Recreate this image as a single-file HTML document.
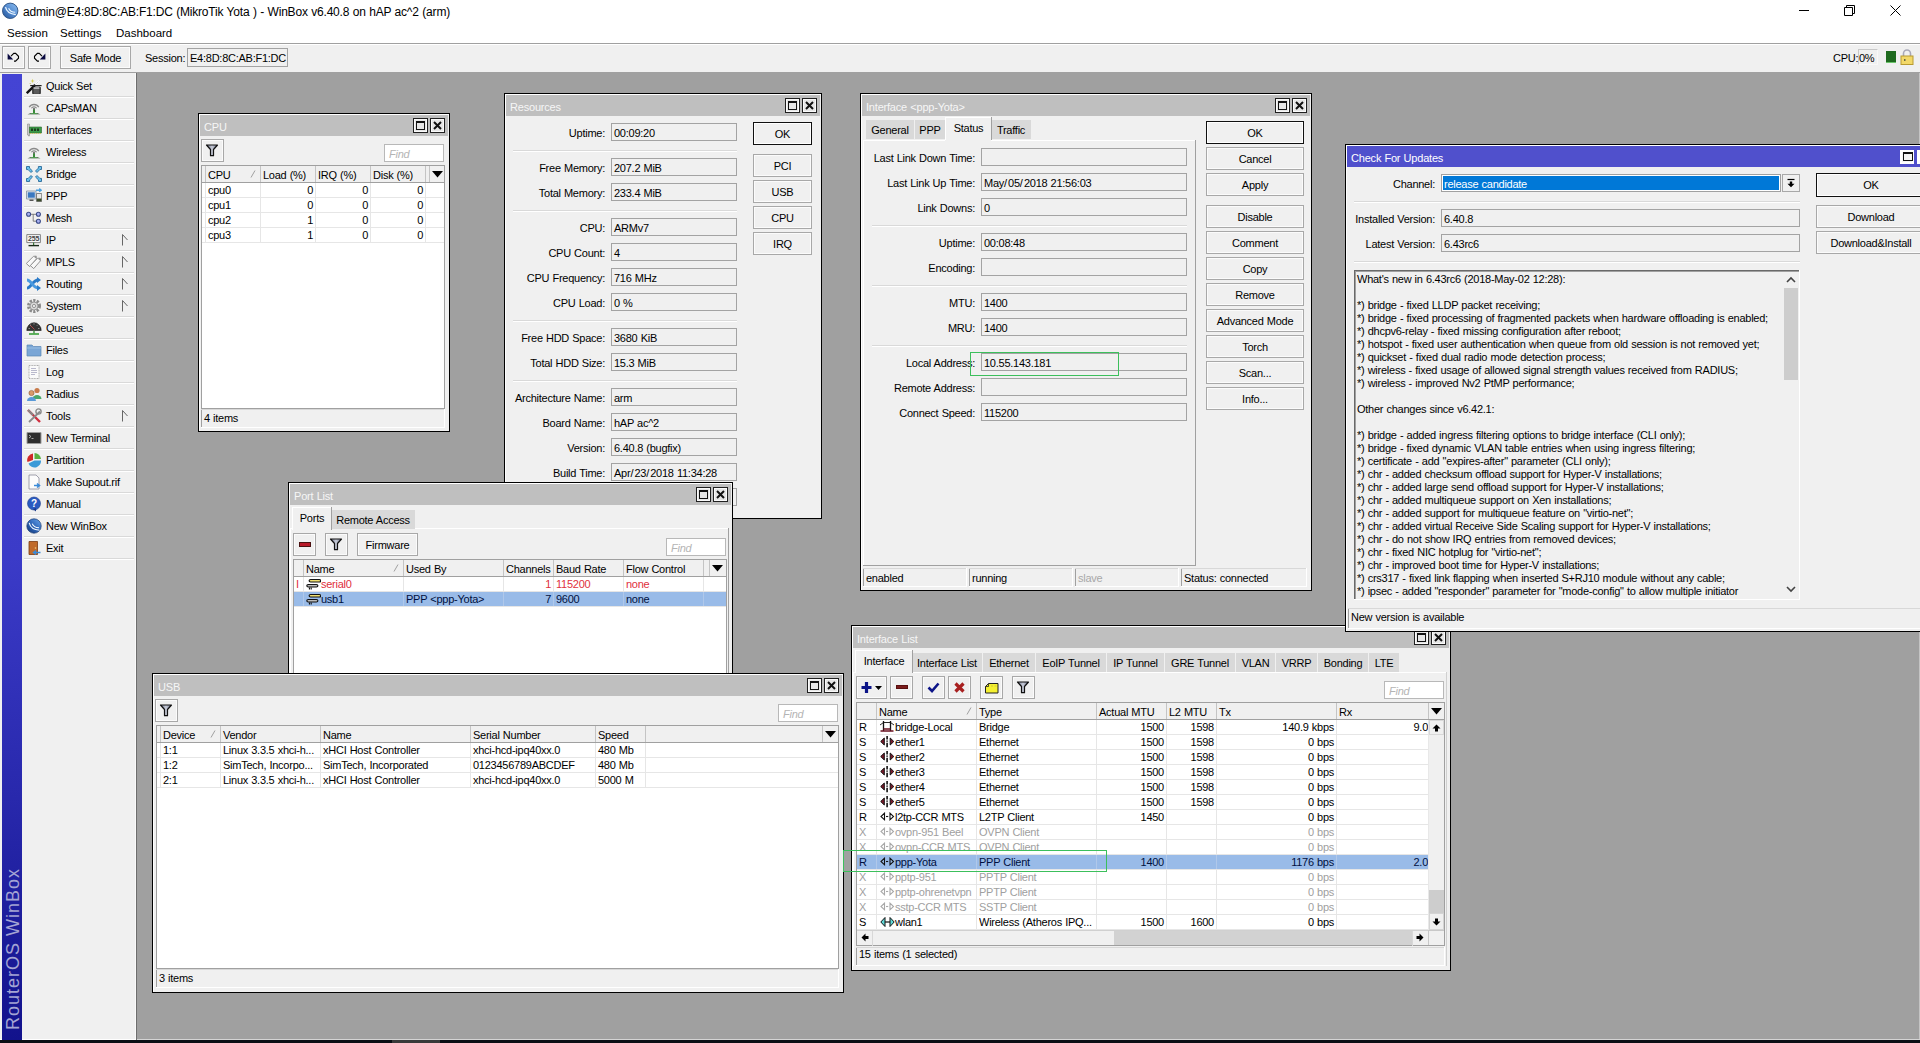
<!DOCTYPE html><html><head><meta charset="utf-8"><style>
html,body{margin:0;padding:0}
body{width:1920px;height:1043px;overflow:hidden;position:relative;background:#a0a0a0;font-family:"Liberation Sans",sans-serif;font-size:11px;color:#000;letter-spacing:-0.25px}
.a{position:absolute}
.t{position:absolute;white-space:nowrap;line-height:13px;word-spacing:0.4px}
.sl{font-style:normal;letter-spacing:1px}
svg{display:block}
</style></head><body>
<div class="a" style="left:0px;top:0px;width:1920px;height:43px;background:#ffffff;"></div>
<div class="a" style="left:0px;top:0px;"><svg width="21" height="21" viewBox="0 0 21 21"><defs><linearGradient id="g1" x1="1" y1="0" x2="0" y2="1"><stop offset="0" stop-color="#8ec0f4"/><stop offset="0.55" stop-color="#4f86cc"/><stop offset="1" stop-color="#1e4f92"/></linearGradient></defs><circle cx="10.2" cy="10.8" r="7.7" fill="url(#g1)" stroke="#2a4f80" stroke-width="0.9"/><path d="M5.5 7.2Q7 13.8 15.8 14.6" stroke="#eaf6ff" stroke-width="1.3" fill="none"/><path d="M8.6 8.2Q10.2 12 15.2 12.3" stroke="#eaf6ff" stroke-width="1.1" fill="none"/></svg></div>
<div class="t" style="top:6px;left:23px;color:#000;font-size:12px;letter-spacing:-0.2px;">admin@E4:8D:8C:AB:F1:DC (MikroTik Yota ) - WinBox v6.40.8 on hAP ac^2 (arm)</div>
<div class="a" style="left:1799px;top:10px;width:10px;height:1px;background:#000;"></div>
<div class="a" style="left:1844px;top:5px;"><svg width="11" height="11" viewBox="0 0 11 11"><path d="M0.5 2.5h8v8h-8z M2.5 2.5v-2h8v8h-2" stroke="#000" fill="none"/></svg></div>
<div class="a" style="left:1890px;top:5px;"><svg width="11" height="11" viewBox="0 0 11 11"><path d="M0.5 0.5L10.5 10.5M10.5 0.5L0.5 10.5" stroke="#000" fill="none"/></svg></div>
<div class="t" style="top:27px;left:7px;color:#000;font-size:11.5px;letter-spacing:0px;">Session</div>
<div class="t" style="top:27px;left:60px;color:#000;font-size:11.5px;letter-spacing:0px;">Settings</div>
<div class="t" style="top:27px;left:116px;color:#000;font-size:11.5px;letter-spacing:0px;">Dashboard</div>
<div class="a" style="left:0px;top:43px;width:1920px;height:1px;background:#a0a0a0;"></div>
<div class="a" style="left:0px;top:44px;width:1920px;height:1px;background:#ffffff;"></div>
<div class="a" style="left:0px;top:45px;width:1920px;height:27px;background:#f0f0f0;"></div>
<div class="a" style="left:2px;top:46px;width:23px;height:23px;background:#f0f0f0;border:1px solid #a8a8a8;box-sizing:border-box;"></div>
<div class="a" style="left:3px;top:47px;width:21px;height:21px;border:1px solid #fbfbfb;box-sizing:border-box;"></div>
<div class="a" style="left:28px;top:46px;width:23px;height:23px;background:#f0f0f0;border:1px solid #a8a8a8;box-sizing:border-box;"></div>
<div class="a" style="left:29px;top:47px;width:21px;height:21px;border:1px solid #fbfbfb;box-sizing:border-box;"></div>
<div class="a" style="left:7px;top:52px;"><svg width="13" height="11" viewBox="0 0 13 11"><path d="M0.6 1.4L0.6 7.6L6.2 7.6z" fill="#0a0a40"/><path d="M4 4.2L6.8 1.4H8.6L11.5 4.3V6.2L8.6 9.1H7" stroke="#000" stroke-width="1.1" fill="none"/></svg></div>
<div class="a" style="left:33px;top:52px;"><svg width="13" height="11" viewBox="0 0 13 11"><path d="M12.4 1.4L12.4 7.6L6.8 7.6z" fill="#0a0a40"/><path d="M9 4.2L6.2 1.4H4.4L1.5 4.3V6.2L4.4 9.1H6" stroke="#000" stroke-width="1.1" fill="none"/></svg></div>
<div class="a" style="left:60px;top:46px;width:71px;height:23px;background:#f0f0f0;border:1px solid #a8a8a8;box-sizing:border-box;"></div>
<div class="a" style="left:61px;top:47px;width:69px;height:21px;border:1px solid #fbfbfb;box-sizing:border-box;"></div>
<div class="t" style="top:52px;left:-104.5px;width:400px;text-align:center;">Safe Mode</div>
<div class="t" style="top:52px;left:145px;">Session:</div>
<div class="a" style="left:187px;top:48px;width:101px;height:19px;background:#f0f0f0;border:1px solid #a3a3a3;box-sizing:border-box;"></div>
<div class="t" style="top:52px;left:190px;color:#000;">E4:8D:8C:AB:F1:DC</div>
<div class="t" style="top:52px;left:1833px;">CPU:</div>
<div class="a" style="left:1858px;top:49px;width:20px;height:16px;background:#f0f0f0;border:1px solid #c8c8c8;box-sizing:border-box;border-right-color:#f8f8f8;border-bottom-color:#f8f8f8;"></div>
<div class="t" style="top:52px;left:1859px;">0%</div>
<div class="a" style="left:1886px;top:51px;width:10px;height:12px;background:#1e6a1e;"></div>
<div class="a" style="left:1886px;top:62px;width:10px;height:1px;background:#6ac46a;"></div>
<div class="a" style="left:1900px;top:49px;"><svg width="14" height="16" viewBox="0 0 14 16"><path d="M3.5 7V4.5a3.5 3.5 0 0 1 7 0V7" stroke="#a8a8b8" stroke-width="1.6" fill="none"/><rect x="1" y="7" width="12" height="8.5" fill="#f2d868" stroke="#b89a30"/><rect x="4" y="10" width="1.5" height="2" fill="#664"/></svg></div>
<div class="a" style="left:0px;top:72px;width:1920px;height:1px;background:#a0a0a0;"></div>
<div class="a" style="left:0px;top:73px;width:136px;height:967px;background:#f0f0f0;"></div>
<div class="a" style="left:135px;top:73px;width:1px;height:967px;background:#fafafa;"></div>
<div class="a" style="left:136px;top:73px;width:1px;height:967px;background:#6e6e6e;"></div>
<div class="a" style="left:1919px;top:73px;width:1px;height:966px;background:#c4c4c4;"></div>
<div class="a" style="left:0px;top:1039px;width:136px;height:1px;background:#ffffff;"></div>
<div class="a" style="left:137px;top:1039px;width:1783px;height:1px;background:#d4d4d4;"></div>
<div class="a" style="left:2px;top:74px;width:20px;height:966px;background:linear-gradient(#4444d4,#3b3bc8 50%,#2828ac 75%,#12128c);"></div>
<div class="a" style="left:3px;top:870px;"><div style="width:170px;height:20px;transform-origin:0 0;transform:translate(0px,160px) rotate(-90deg);font-size:18px;line-height:20px;color:#a4a4d4;letter-spacing:1px;white-space:nowrap">RouterOS WinBox</div></div>
<div class="t" style="top:80px;left:46px;">Quick Set</div>
<div class="a" style="left:24px;top:96px;width:110px;height:1px;background:#d9d9d9;"></div>
<div class="a" style="left:24px;top:97px;width:110px;height:1px;background:#ffffff;"></div>
<div class="a" style="left:26px;top:78px;"><svg width="16" height="16" viewBox="0 0 16 16"><path d="M0.8 15.2L9.2 6.8" stroke="#111" stroke-width="2.4"/><path d="M9.8 6.2L13.4 2.8" stroke="#fff" stroke-width="2.2"/><path d="M9.8 6.2L13.4 2.8" stroke="#888" stroke-width="0.5" stroke-dasharray="1 1"/><path d="M6.8 9.2h7.4v6.2a1 1 0 0 1-1 1H7.8a1 1 0 0 1-1-1z" fill="#5a5a5a" stroke="#111" stroke-width="1"/><path d="M4.2 7.6h11.4" stroke="#222" stroke-width="1.2"/><path d="M7.6 10h5.8" stroke="#eee" stroke-width="1.2"/><path d="M6.5 0.8l.6 1.6 1.6.6-1.6.6-.6 1.6-.6-1.6-1.6-.6 1.6-.6z" fill="#d6cf5a"/><circle cx="4.2" cy="5.6" r="0.7" fill="#c8c060"/></svg></div>
<div class="t" style="top:102px;left:46px;">CAPsMAN</div>
<div class="a" style="left:24px;top:118px;width:110px;height:1px;background:#d9d9d9;"></div>
<div class="a" style="left:24px;top:119px;width:110px;height:1px;background:#ffffff;"></div>
<div class="a" style="left:26px;top:100px;"><svg width="16" height="16" viewBox="0 0 16 16"><path d="M3.2 7.2a5.6 5.6 0 0 1 9.6 0" stroke="#8a8a8a" stroke-width="1.3" fill="none"/><path d="M5.4 8.3a3 3 0 0 1 5.2 0" stroke="#8a8a8a" stroke-width="1.2" fill="none"/><circle cx="8" cy="9" r="1" fill="#555"/><path d="M8 9.5v4" stroke="#3c8a3c" stroke-width="2"/><path d="M1.5 14.3q6.5-2.5 13 0z" fill="#1e3a1e"/><path d="M5 13.6h6" stroke="#5ab05a" stroke-width="0.9"/></svg></div>
<div class="t" style="top:124px;left:46px;">Interfaces</div>
<div class="a" style="left:24px;top:140px;width:110px;height:1px;background:#d9d9d9;"></div>
<div class="a" style="left:24px;top:141px;width:110px;height:1px;background:#ffffff;"></div>
<div class="a" style="left:26px;top:122px;"><svg width="16" height="16" viewBox="0 0 16 16"><path d="M1.5 2h2v12h-1v-1h-1z" fill="#c8c8c8" stroke="#8a8a8a" stroke-width="0.6"/><path d="M3.5 5h12v6h-12z" fill="#3c9a4a" stroke="#2a6a2a" stroke-width="0.6"/><path d="M5 6.5h2v2.5h-2zM8 6.5h2v2.5h-2zM11 6.5h2v2.5h-2z" fill="#1e3a1e"/><path d="M4 11.5h11" stroke="#d0c060" stroke-width="1" stroke-dasharray="1 1"/></svg></div>
<div class="t" style="top:146px;left:46px;">Wireless</div>
<div class="a" style="left:24px;top:162px;width:110px;height:1px;background:#d9d9d9;"></div>
<div class="a" style="left:24px;top:163px;width:110px;height:1px;background:#ffffff;"></div>
<div class="a" style="left:26px;top:144px;"><svg width="16" height="16" viewBox="0 0 16 16"><path d="M3.2 7.2a5.6 5.6 0 0 1 9.6 0" stroke="#8a8a8a" stroke-width="1.3" fill="none"/><path d="M5.4 8.3a3 3 0 0 1 5.2 0" stroke="#8a8a8a" stroke-width="1.2" fill="none"/><circle cx="8" cy="9" r="1" fill="#555"/><path d="M8 9.5v4" stroke="#3c8a3c" stroke-width="2"/><path d="M1.5 14.3q6.5-2.5 13 0z" fill="#1e3a1e"/><path d="M5 13.6h6" stroke="#5ab05a" stroke-width="0.9"/></svg></div>
<div class="t" style="top:168px;left:46px;">Bridge</div>
<div class="a" style="left:24px;top:184px;width:110px;height:1px;background:#d9d9d9;"></div>
<div class="a" style="left:24px;top:185px;width:110px;height:1px;background:#ffffff;"></div>
<div class="a" style="left:26px;top:166px;"><svg width="16" height="16" viewBox="0 0 16 16"><g fill="#6ac2ee" stroke="#2a6a98" stroke-width="0.9" stroke-linejoin="round"><path d="M0.5 0.5h3v1.6L6.5 5 5 6.5 2.1 3.6H0.5z"/><path d="M15.5 0.5v3h-1.6L11 6.5 9.5 5l2.9-2.9V0.5z"/><path d="M0.5 15.5v-3h1.6L5 9.5 6.5 11l-2.9 2.9v1.6z"/><path d="M15.5 15.5h-3v-1.6L9.5 11 11 9.5l2.9 2.9h1.6z"/></g></svg></div>
<div class="t" style="top:190px;left:46px;">PPP</div>
<div class="a" style="left:24px;top:206px;width:110px;height:1px;background:#d9d9d9;"></div>
<div class="a" style="left:24px;top:207px;width:110px;height:1px;background:#ffffff;"></div>
<div class="a" style="left:26px;top:188px;"><svg width="16" height="16" viewBox="0 0 16 16"><path d="M0.5 3h9.5v8H0.5z" fill="#dfe8f0" stroke="#8a98a8" stroke-width="0.9"/><path d="M1.8 4.3h7v5.4h-7z" fill="#3a78c0"/><path d="M3.5 11.5h4v1.5h-4z" fill="#555"/><path d="M10.5 5.5h5.2v8h-5.2z" fill="#e8e8e8" stroke="#6a6a6a" stroke-width="0.8"/><path d="M10.8 10.5h4.7v2.8h-4.7z" fill="#3a4a2a"/><path d="M10 2.2h5M13.2 0.6l2 1.6-2 1.6" stroke="#4aa0e0" stroke-width="1.4" fill="none"/></svg></div>
<div class="t" style="top:212px;left:46px;">Mesh</div>
<div class="a" style="left:24px;top:228px;width:110px;height:1px;background:#d9d9d9;"></div>
<div class="a" style="left:24px;top:229px;width:110px;height:1px;background:#ffffff;"></div>
<div class="a" style="left:26px;top:210px;"><svg width="16" height="16" viewBox="0 0 16 16"><path d="M4.6 4.3H10.2M7.2 4.3v6.9h3" stroke="#666" stroke-width="0.8" fill="none"/><circle cx="2.6" cy="4.3" r="2" fill="#aab2f2" stroke="#3a4a88" stroke-width="1.1"/><circle cx="12.4" cy="4.3" r="2" fill="#aab2f2" stroke="#3a4a88" stroke-width="1.1"/><circle cx="12.4" cy="11.2" r="2" fill="#aab2f2" stroke="#3a4a88" stroke-width="1.1"/></svg></div>
<div class="t" style="top:234px;left:46px;">IP</div>
<div class="a" style="left:24px;top:250px;width:110px;height:1px;background:#d9d9d9;"></div>
<div class="a" style="left:24px;top:251px;width:110px;height:1px;background:#ffffff;"></div>
<div class="a" style="left:122px;top:234px;"><svg width="6" height="12" viewBox="0 0 6 12"><path d="M0.5 0.5v11M0.5 0.5L5.5 6" stroke="#666" stroke-width="1" fill="none"/></svg></div>
<div class="a" style="left:26px;top:232px;"><svg width="16" height="16" viewBox="0 0 16 16"><path d="M0.8 2.6h13.6v8H0.8z" fill="#fafafa" stroke="#777" stroke-width="0.9"/><text x="7.6" y="9.4" font-size="7" font-weight="bold" font-family="Liberation Sans" text-anchor="middle" fill="#444" letter-spacing="-0.2">255</text><path d="M7.6 10.6v2.6" stroke="#3a7a3a" stroke-width="1.2"/><path d="M2.5 13.6h10.5" stroke="#1a2a1a" stroke-width="1.4"/></svg></div>
<div class="t" style="top:256px;left:46px;">MPLS</div>
<div class="a" style="left:24px;top:272px;width:110px;height:1px;background:#d9d9d9;"></div>
<div class="a" style="left:24px;top:273px;width:110px;height:1px;background:#ffffff;"></div>
<div class="a" style="left:122px;top:256px;"><svg width="6" height="12" viewBox="0 0 6 12"><path d="M0.5 0.5v11M0.5 0.5L5.5 6" stroke="#666" stroke-width="1" fill="none"/></svg></div>
<div class="a" style="left:26px;top:254px;"><svg width="16" height="16" viewBox="0 0 16 16"><path d="M0.3 9.5L7.5 2.3 10.3 2.2 10.3 5 3.7 12.6z" fill="#f8f8f8" stroke="#888" stroke-width="0.9" stroke-linejoin="round"/><path d="M4.3 11.5L11.5 4.3 14.3 4.2 14.3 7 7.7 14.6z" fill="#f8f8f8" stroke="#888" stroke-width="0.9" stroke-linejoin="round"/><circle cx="9.3" cy="3.2" r="0.6" fill="#666"/><circle cx="13.3" cy="5.2" r="0.6" fill="#666"/></svg></div>
<div class="t" style="top:278px;left:46px;">Routing</div>
<div class="a" style="left:24px;top:294px;width:110px;height:1px;background:#d9d9d9;"></div>
<div class="a" style="left:24px;top:295px;width:110px;height:1px;background:#ffffff;"></div>
<div class="a" style="left:122px;top:278px;"><svg width="6" height="12" viewBox="0 0 6 12"><path d="M0.5 0.5v11M0.5 0.5L5.5 6" stroke="#666" stroke-width="1" fill="none"/></svg></div>
<div class="a" style="left:26px;top:276px;"><svg width="16" height="16" viewBox="0 0 16 16"><path d="M1 12c4 0 6-8 11-8" stroke="#2a7ac8" stroke-width="3" fill="none"/><path d="M1 4c4 0 6 8 11 8" stroke="#4a9ae0" stroke-width="3" fill="none"/><path d="M11 1l4 3-4 3z M11 9l4 3-4 3z" fill="#2a7ac8"/></svg></div>
<div class="t" style="top:300px;left:46px;">System</div>
<div class="a" style="left:24px;top:316px;width:110px;height:1px;background:#d9d9d9;"></div>
<div class="a" style="left:24px;top:317px;width:110px;height:1px;background:#ffffff;"></div>
<div class="a" style="left:122px;top:300px;"><svg width="6" height="12" viewBox="0 0 6 12"><path d="M0.5 0.5v11M0.5 0.5L5.5 6" stroke="#666" stroke-width="1" fill="none"/></svg></div>
<div class="a" style="left:26px;top:298px;"><svg width="16" height="16" viewBox="0 0 16 16"><circle cx="8" cy="8" r="5.5" fill="none" stroke="#8a8a8a" stroke-width="3" stroke-dasharray="2.2 1.3"/><circle cx="8" cy="8" r="4" fill="#d8d8d8" stroke="#8a8a8a" stroke-width="0.8"/><circle cx="8" cy="8" r="1.6" fill="#f0f0f0" stroke="#777" stroke-width="0.7"/></svg></div>
<div class="t" style="top:322px;left:46px;">Queues</div>
<div class="a" style="left:24px;top:338px;width:110px;height:1px;background:#d9d9d9;"></div>
<div class="a" style="left:24px;top:339px;width:110px;height:1px;background:#ffffff;"></div>
<div class="a" style="left:26px;top:320px;"><svg width="16" height="16" viewBox="0 0 16 16"><path d="M0.8 10.5a7.2 7.8 0 0 1 14.4 0z" fill="#333" stroke="#1a1a1a" stroke-width="0.6"/><path d="M4 5l4.5 4.5" stroke="#c04848" stroke-width="0.9"/><path d="M2.6 8.5h1.2M4.2 4.8l.8.8M8 3.3v1.2M11.8 4.8l-.8.8M13.4 8.5h-1.2" stroke="#bbb" stroke-width="0.8"/><path d="M8 10.5v3" stroke="#3c8a3c" stroke-width="1.4"/><path d="M3 14h10" stroke="#3aa03a" stroke-width="1.6"/></svg></div>
<div class="t" style="top:344px;left:46px;">Files</div>
<div class="a" style="left:24px;top:360px;width:110px;height:1px;background:#d9d9d9;"></div>
<div class="a" style="left:24px;top:361px;width:110px;height:1px;background:#ffffff;"></div>
<div class="a" style="left:26px;top:342px;"><svg width="16" height="16" viewBox="0 0 16 16"><path d="M1 3h5l1.5 1.5H15V14H1z" fill="#7aa6d6" stroke="#5a86b6" stroke-width="0.7"/><path d="M1 6h14" stroke="#a8c8e8" stroke-width="0.7"/></svg></div>
<div class="t" style="top:366px;left:46px;">Log</div>
<div class="a" style="left:24px;top:382px;width:110px;height:1px;background:#d9d9d9;"></div>
<div class="a" style="left:24px;top:383px;width:110px;height:1px;background:#ffffff;"></div>
<div class="a" style="left:26px;top:364px;"><svg width="16" height="16" viewBox="0 0 16 16"><path d="M3 1.5h10v13H3z" fill="#fafafa" stroke="#9a9a9a" stroke-width="0.8" stroke-dasharray="1 0.6"/><path d="M5 4.5h5M5 6.5h6M5 8.5h6M5 10.5h4" stroke="#a8a8c0" stroke-width="0.8"/></svg></div>
<div class="t" style="top:388px;left:46px;">Radius</div>
<div class="a" style="left:24px;top:404px;width:110px;height:1px;background:#d9d9d9;"></div>
<div class="a" style="left:24px;top:405px;width:110px;height:1px;background:#ffffff;"></div>
<div class="a" style="left:26px;top:386px;"><svg width="16" height="16" viewBox="0 0 16 16"><circle cx="11" cy="4.5" r="2.6" fill="#c87a4a"/><path d="M6.5 13a4.5 4 0 0 1 9 0z" fill="#4aa86a"/><circle cx="5.5" cy="7" r="2.6" fill="#d89a6a" stroke="#7a4a2a" stroke-width="0.5"/><path d="M1 15a4.5 4 0 0 1 9 0z" fill="#5a9ad8"/></svg></div>
<div class="t" style="top:410px;left:46px;">Tools</div>
<div class="a" style="left:24px;top:426px;width:110px;height:1px;background:#d9d9d9;"></div>
<div class="a" style="left:24px;top:427px;width:110px;height:1px;background:#ffffff;"></div>
<div class="a" style="left:122px;top:410px;"><svg width="6" height="12" viewBox="0 0 6 12"><path d="M0.5 0.5v11M0.5 0.5L5.5 6" stroke="#666" stroke-width="1" fill="none"/></svg></div>
<div class="a" style="left:26px;top:408px;"><svg width="16" height="16" viewBox="0 0 16 16"><path d="M2 2l12 12" stroke="#d03040" stroke-width="2.4"/><path d="M2 2l5 5" stroke="#888" stroke-width="2"/><path d="M14 3.5L3 14" stroke="#8a8a8a" stroke-width="1.8"/><circle cx="12.5" cy="3.5" r="2.6" fill="none" stroke="#8a8a8a" stroke-width="1.4"/></svg></div>
<div class="t" style="top:432px;left:46px;">New Terminal</div>
<div class="a" style="left:24px;top:448px;width:110px;height:1px;background:#d9d9d9;"></div>
<div class="a" style="left:24px;top:449px;width:110px;height:1px;background:#ffffff;"></div>
<div class="a" style="left:26px;top:430px;"><svg width="16" height="16" viewBox="0 0 16 16"><path d="M1 2.5h14v11H1z" fill="#2e2e2e" stroke="#9a9a9a" stroke-width="1"/><path d="M3 5l2 1.5L3 8M5.5 8.5h2" stroke="#ddd" stroke-width="0.7" fill="none"/></svg></div>
<div class="t" style="top:454px;left:46px;">Partition</div>
<div class="a" style="left:24px;top:470px;width:110px;height:1px;background:#d9d9d9;"></div>
<div class="a" style="left:24px;top:471px;width:110px;height:1px;background:#ffffff;"></div>
<div class="a" style="left:26px;top:452px;"><svg width="16" height="16" viewBox="0 0 16 16"><path d="M7 1.5A6.5 6.5 0 0 0 1.5 10L7 8z" fill="#d02828"/><path d="M8.5 1A6.5 6.5 0 0 1 15 7H8.5z" fill="#5ab040"/><path d="M15 8.5A6.5 6.5 0 0 1 2.5 11.5L8.5 8.5z" fill="#3a9ad8"/></svg></div>
<div class="t" style="top:476px;left:46px;">Make Supout.rif</div>
<div class="a" style="left:24px;top:492px;width:110px;height:1px;background:#d9d9d9;"></div>
<div class="a" style="left:24px;top:493px;width:110px;height:1px;background:#ffffff;"></div>
<div class="a" style="left:26px;top:474px;"><svg width="16" height="16" viewBox="0 0 16 16"><path d="M3 1h7l3 3v11H3z" fill="#fcfcfc" stroke="#8a8a9a" stroke-width="0.8"/><path d="M8 11.5h5M11 9.5l2.5 2-2.5 2" stroke="#3a8ad8" stroke-width="1.5" fill="none"/></svg></div>
<div class="t" style="top:498px;left:46px;">Manual</div>
<div class="a" style="left:24px;top:514px;width:110px;height:1px;background:#d9d9d9;"></div>
<div class="a" style="left:24px;top:515px;width:110px;height:1px;background:#ffffff;"></div>
<div class="a" style="left:26px;top:496px;"><svg width="16" height="16" viewBox="0 0 16 16"><circle cx="8" cy="7.5" r="6.5" fill="#2a5ac0" stroke="#1a3a8a" stroke-width="0.6"/><path d="M7 13l3 2.5V12z" fill="#1a3a8a"/><text x="8" y="11" font-size="10" font-weight="bold" font-family="Liberation Sans" text-anchor="middle" fill="#fff">?</text></svg></div>
<div class="t" style="top:520px;left:46px;">New WinBox</div>
<div class="a" style="left:24px;top:536px;width:110px;height:1px;background:#d9d9d9;"></div>
<div class="a" style="left:24px;top:537px;width:110px;height:1px;background:#ffffff;"></div>
<div class="a" style="left:26px;top:518px;"><svg width="16" height="16" viewBox="0 0 16 16"><defs><linearGradient id="g2" x1="1" y1="0" x2="0" y2="1"><stop offset="0" stop-color="#6aa8ee"/><stop offset="0.5" stop-color="#2f66b8"/><stop offset="1" stop-color="#12397a"/></linearGradient></defs><circle cx="8" cy="8" r="7.2" fill="url(#g2)" stroke="#1a3a70" stroke-width="0.7"/><path d="M3.2 4.8Q4.8 11.6 13.6 12.2M6.2 5.6Q7.8 9.6 13 9.8" stroke="#f0f8ff" stroke-width="1.1" fill="none"/></svg></div>
<div class="t" style="top:542px;left:46px;">Exit</div>
<div class="a" style="left:24px;top:558px;width:110px;height:1px;background:#d9d9d9;"></div>
<div class="a" style="left:24px;top:559px;width:110px;height:1px;background:#ffffff;"></div>
<div class="a" style="left:26px;top:540px;"><svg width="16" height="16" viewBox="0 0 16 16"><path d="M3 1.5h8.5v13H3z" fill="#c06a2a" stroke="#7a3a10" stroke-width="0.8"/><circle cx="9.5" cy="8" r="0.8" fill="#f0d080"/><path d="M7.5 12.5h7M10 10.5l-2.5 2 2.5 2" stroke="#3a8ad8" stroke-width="1.5" fill="none"/></svg></div>
<div class="a" style="left:0px;top:1040px;width:1920px;height:3px;background:#0a0e14;"></div>
<div class="a" style="left:392px;top:1040px;width:48px;height:3px;background:#3a3a3a;"></div>
<div class="a" style="left:198px;top:113px;width:252px;height:319px;background:#000;"></div>
<div class="a" style="left:199px;top:114px;width:250px;height:317px;background:#ffffff;"></div>
<div class="a" style="left:200px;top:115px;width:249px;height:316px;background:#f0f0f0;"></div>
<div class="a" style="left:199px;top:431px;width:251px;height:1px;background:#000;"></div>
<div class="a" style="left:200px;top:115px;width:248px;height:21px;background:#bfbfbf;"></div>
<div class="t" style="top:121px;left:204px;color:#f6f6f6;letter-spacing:-0.2px;">CPU</div>
<div class="a" style="left:413px;top:118px;width:15px;height:15px;background:#e6e6e6;border:1px solid #202020;box-sizing:border-box;"></div>
<div class="a" style="left:414px;top:119px;width:13px;height:13px;border:1px solid #fafafa;box-sizing:border-box;"></div>
<div class="a" style="left:416px;top:121px;width:9px;height:9px;border:1px solid #111;box-sizing:border-box;border-top-width:2px;"></div>
<div class="a" style="left:430px;top:118px;width:15px;height:15px;background:#e6e6e6;border:1px solid #202020;box-sizing:border-box;"></div>
<div class="a" style="left:431px;top:119px;width:13px;height:13px;border:1px solid #fafafa;box-sizing:border-box;"></div>
<div class="a" style="left:432px;top:120px;"><svg width="11" height="11" viewBox="0 0 11 11"><path d="M2 2L9 9M9 2L2 9" stroke="#111" stroke-width="2"/></svg></div>
<div class="a" style="left:201px;top:139px;width:23px;height:23px;background:#f0f0f0;border:1px solid #a8a8a8;box-sizing:border-box;"></div>
<div class="a" style="left:202px;top:140px;width:21px;height:21px;border:1px solid #fbfbfb;box-sizing:border-box;"></div>
<div class="a" style="left:205px;top:143px;"><svg width="14" height="14" viewBox="0 0 14 14"><defs><linearGradient id="fg" x1="0" x2="1"><stop offset="0" stop-color="#6a7088"/><stop offset="0.5" stop-color="#c8ccd8"/><stop offset="1" stop-color="#6a7088"/></linearGradient></defs><path d="M1.5 2h11l-4 4.5v6.2h-3V6.5z" fill="url(#fg)" stroke="#111" stroke-width="1.2" stroke-linejoin="round"/></svg></div>
<div class="a" style="left:384px;top:144px;width:60px;height:18px;background:#ffffff;border:1px solid #b8b8b8;box-sizing:border-box;"></div>
<div class="t" style="top:148px;left:389px;color:#b4b4b4;font-style:italic;">Find</div>
<div class="a" style="left:201px;top:165px;width:244px;height:244px;background:#ffffff;border:1px solid #a0a0a0;box-sizing:border-box;"></div>
<div class="a" style="left:202px;top:166px;width:242px;height:16px;background:#f0f0f0;"></div>
<div class="a" style="left:202px;top:182px;width:242px;height:1px;background:#a0a0a0;"></div>
<div class="a" style="left:205px;top:166px;width:1px;height:16px;background:#c4c4c4;"></div>
<div class="a" style="left:260px;top:166px;width:1px;height:16px;background:#c4c4c4;"></div>
<div class="a" style="left:315px;top:166px;width:1px;height:16px;background:#c4c4c4;"></div>
<div class="a" style="left:370px;top:166px;width:1px;height:16px;background:#c4c4c4;"></div>
<div class="a" style="left:425px;top:166px;width:1px;height:16px;background:#c4c4c4;"></div>
<div class="a" style="left:429px;top:166px;width:1px;height:16px;background:#c4c4c4;"></div>
<div class="a" style="left:205px;top:183px;width:1px;height:60px;background:#e6e6e6;"></div>
<div class="a" style="left:260px;top:183px;width:1px;height:60px;background:#e6e6e6;"></div>
<div class="a" style="left:315px;top:183px;width:1px;height:60px;background:#e6e6e6;"></div>
<div class="a" style="left:370px;top:183px;width:1px;height:60px;background:#e6e6e6;"></div>
<div class="a" style="left:425px;top:183px;width:1px;height:60px;background:#e6e6e6;"></div>
<div class="a" style="left:202px;top:197px;width:242px;height:1px;background:#e6e6e6;"></div>
<div class="a" style="left:202px;top:212px;width:242px;height:1px;background:#e6e6e6;"></div>
<div class="a" style="left:202px;top:227px;width:242px;height:1px;background:#e6e6e6;"></div>
<div class="a" style="left:202px;top:242px;width:242px;height:1px;background:#e6e6e6;"></div>
<div class="a" style="left:202px;top:182px;width:242px;height:1px;background:#a0a0a0;"></div>
<div class="t" style="top:169px;left:208px;">CPU</div>
<div class="a" style="left:250px;top:170px;"><svg width="6" height="8" viewBox="0 0 6 8"><path d="M1 7.5L5 0.5" stroke="#a0a0a0" stroke-width="1"/></svg></div>
<div class="t" style="top:169px;left:263px;">Load (%)</div>
<div class="t" style="top:169px;left:318px;">IRQ (%)</div>
<div class="t" style="top:169px;left:373px;">Disk (%)</div>
<div class="a" style="left:432px;top:171px;"><svg width="11" height="7" viewBox="0 0 11 7"><path d="M0 0h11L5.5 6.5z" fill="#000"/></svg></div>
<div class="t" style="top:184px;left:208px;">cpu0</div>
<div class="t" style="top:184px;left:-87px;width:400px;text-align:right;">0</div>
<div class="t" style="top:184px;left:-32px;width:400px;text-align:right;">0</div>
<div class="t" style="top:184px;left:23px;width:400px;text-align:right;">0</div>
<div class="t" style="top:199px;left:208px;">cpu1</div>
<div class="t" style="top:199px;left:-87px;width:400px;text-align:right;">0</div>
<div class="t" style="top:199px;left:-32px;width:400px;text-align:right;">0</div>
<div class="t" style="top:199px;left:23px;width:400px;text-align:right;">0</div>
<div class="t" style="top:214px;left:208px;">cpu2</div>
<div class="t" style="top:214px;left:-87px;width:400px;text-align:right;">1</div>
<div class="t" style="top:214px;left:-32px;width:400px;text-align:right;">0</div>
<div class="t" style="top:214px;left:23px;width:400px;text-align:right;">0</div>
<div class="t" style="top:229px;left:208px;">cpu3</div>
<div class="t" style="top:229px;left:-87px;width:400px;text-align:right;">1</div>
<div class="t" style="top:229px;left:-32px;width:400px;text-align:right;">0</div>
<div class="t" style="top:229px;left:23px;width:400px;text-align:right;">0</div>
<div class="a" style="left:201px;top:409px;width:1px;height:19px;background:#a0a0a0;"></div>
<div class="a" style="left:201px;top:409px;width:244px;height:1px;background:#d8d8d8;"></div>
<div class="a" style="left:444px;top:409px;width:1px;height:19px;background:#ffffff;"></div>
<div class="a" style="left:201px;top:427px;width:244px;height:1px;background:#ffffff;"></div>
<div class="t" style="top:412px;left:204px;color:#000;">4 items</div>
<div class="a" style="left:504px;top:93px;width:318px;height:426px;background:#000;"></div>
<div class="a" style="left:505px;top:94px;width:316px;height:424px;background:#ffffff;"></div>
<div class="a" style="left:506px;top:95px;width:315px;height:423px;background:#f0f0f0;"></div>
<div class="a" style="left:505px;top:518px;width:317px;height:1px;background:#000;"></div>
<div class="a" style="left:506px;top:95px;width:314px;height:21px;background:#bfbfbf;"></div>
<div class="t" style="top:101px;left:510px;color:#f6f6f6;letter-spacing:-0.2px;">Resources</div>
<div class="a" style="left:785px;top:98px;width:15px;height:15px;background:#e6e6e6;border:1px solid #202020;box-sizing:border-box;"></div>
<div class="a" style="left:786px;top:99px;width:13px;height:13px;border:1px solid #fafafa;box-sizing:border-box;"></div>
<div class="a" style="left:788px;top:101px;width:9px;height:9px;border:1px solid #111;box-sizing:border-box;border-top-width:2px;"></div>
<div class="a" style="left:802px;top:98px;width:15px;height:15px;background:#e6e6e6;border:1px solid #202020;box-sizing:border-box;"></div>
<div class="a" style="left:803px;top:99px;width:13px;height:13px;border:1px solid #fafafa;box-sizing:border-box;"></div>
<div class="a" style="left:804px;top:100px;"><svg width="11" height="11" viewBox="0 0 11 11"><path d="M2 2L9 9M9 2L2 9" stroke="#111" stroke-width="2"/></svg></div>
<div class="t" style="top:127px;left:205px;width:400px;text-align:right;">Uptime:</div>
<div class="a" style="left:611px;top:123px;width:126px;height:18px;background:#f0f0f0;border:1px solid #a3a3a3;box-sizing:border-box;"></div>
<div class="t" style="top:127px;left:614px;color:#000;">00:09:20</div>
<div class="t" style="top:162px;left:205px;width:400px;text-align:right;">Free Memory:</div>
<div class="a" style="left:611px;top:158px;width:126px;height:18px;background:#f0f0f0;border:1px solid #a3a3a3;box-sizing:border-box;"></div>
<div class="t" style="top:162px;left:614px;color:#000;">207.2 MiB</div>
<div class="t" style="top:187px;left:205px;width:400px;text-align:right;">Total Memory:</div>
<div class="a" style="left:611px;top:183px;width:126px;height:18px;background:#f0f0f0;border:1px solid #a3a3a3;box-sizing:border-box;"></div>
<div class="t" style="top:187px;left:614px;color:#000;">233.4 MiB</div>
<div class="t" style="top:222px;left:205px;width:400px;text-align:right;">CPU:</div>
<div class="a" style="left:611px;top:218px;width:126px;height:18px;background:#f0f0f0;border:1px solid #a3a3a3;box-sizing:border-box;"></div>
<div class="t" style="top:222px;left:614px;color:#000;">ARMv7</div>
<div class="t" style="top:247px;left:205px;width:400px;text-align:right;">CPU Count:</div>
<div class="a" style="left:611px;top:243px;width:126px;height:18px;background:#f0f0f0;border:1px solid #a3a3a3;box-sizing:border-box;"></div>
<div class="t" style="top:247px;left:614px;color:#000;">4</div>
<div class="t" style="top:272px;left:205px;width:400px;text-align:right;">CPU Frequency:</div>
<div class="a" style="left:611px;top:268px;width:126px;height:18px;background:#f0f0f0;border:1px solid #a3a3a3;box-sizing:border-box;"></div>
<div class="t" style="top:272px;left:614px;color:#000;">716 MHz</div>
<div class="t" style="top:297px;left:205px;width:400px;text-align:right;">CPU Load:</div>
<div class="a" style="left:611px;top:293px;width:126px;height:18px;background:#f0f0f0;border:1px solid #a3a3a3;box-sizing:border-box;"></div>
<div class="t" style="top:297px;left:614px;color:#000;">0 %</div>
<div class="t" style="top:332px;left:205px;width:400px;text-align:right;">Free HDD Space:</div>
<div class="a" style="left:611px;top:328px;width:126px;height:18px;background:#f0f0f0;border:1px solid #a3a3a3;box-sizing:border-box;"></div>
<div class="t" style="top:332px;left:614px;color:#000;">3680 KiB</div>
<div class="t" style="top:357px;left:205px;width:400px;text-align:right;">Total HDD Size:</div>
<div class="a" style="left:611px;top:353px;width:126px;height:18px;background:#f0f0f0;border:1px solid #a3a3a3;box-sizing:border-box;"></div>
<div class="t" style="top:357px;left:614px;color:#000;">15.3 MiB</div>
<div class="t" style="top:392px;left:205px;width:400px;text-align:right;">Architecture Name:</div>
<div class="a" style="left:611px;top:388px;width:126px;height:18px;background:#f0f0f0;border:1px solid #a3a3a3;box-sizing:border-box;"></div>
<div class="t" style="top:392px;left:614px;color:#000;">arm</div>
<div class="t" style="top:417px;left:205px;width:400px;text-align:right;">Board Name:</div>
<div class="a" style="left:611px;top:413px;width:126px;height:18px;background:#f0f0f0;border:1px solid #a3a3a3;box-sizing:border-box;"></div>
<div class="t" style="top:417px;left:614px;color:#000;">hAP ac^2</div>
<div class="t" style="top:442px;left:205px;width:400px;text-align:right;">Version:</div>
<div class="a" style="left:611px;top:438px;width:126px;height:18px;background:#f0f0f0;border:1px solid #a3a3a3;box-sizing:border-box;"></div>
<div class="t" style="top:442px;left:614px;color:#000;">6.40.8 (bugfix)</div>
<div class="t" style="top:467px;left:205px;width:400px;text-align:right;">Build Time:</div>
<div class="a" style="left:611px;top:463px;width:126px;height:18px;background:#f0f0f0;border:1px solid #a3a3a3;box-sizing:border-box;"></div>
<div class="t" style="top:467px;left:614px;color:#000;">Apr<i class="sl">/</i>23<i class="sl">/</i>2018 11:34:28</div>
<div class="a" style="left:611px;top:488px;width:126px;height:18px;background:#f0f0f0;border:1px solid #a3a3a3;box-sizing:border-box;"></div>
<div class="a" style="left:513px;top:150px;width:224px;height:1px;background:#d9d9d9;"></div>
<div class="a" style="left:513px;top:151px;width:224px;height:1px;background:#ffffff;"></div>
<div class="a" style="left:513px;top:210px;width:224px;height:1px;background:#d9d9d9;"></div>
<div class="a" style="left:513px;top:211px;width:224px;height:1px;background:#ffffff;"></div>
<div class="a" style="left:513px;top:320px;width:224px;height:1px;background:#d9d9d9;"></div>
<div class="a" style="left:513px;top:321px;width:224px;height:1px;background:#ffffff;"></div>
<div class="a" style="left:513px;top:380px;width:224px;height:1px;background:#d9d9d9;"></div>
<div class="a" style="left:513px;top:381px;width:224px;height:1px;background:#ffffff;"></div>
<div class="a" style="left:753px;top:122px;width:59px;height:23px;background:#f0f0f0;border:1px solid #101010;box-sizing:border-box;"></div>
<div class="a" style="left:754px;top:123px;width:57px;height:21px;border:1px solid #ffffff;box-sizing:border-box;"></div>
<div class="t" style="top:128px;left:582.5px;width:400px;text-align:center;">OK</div>
<div class="a" style="left:753px;top:154px;width:59px;height:23px;background:#f0f0f0;border:1px solid #a8a8a8;box-sizing:border-box;"></div>
<div class="a" style="left:754px;top:155px;width:57px;height:21px;border:1px solid #fbfbfb;box-sizing:border-box;"></div>
<div class="t" style="top:160px;left:582.5px;width:400px;text-align:center;">PCI</div>
<div class="a" style="left:753px;top:180px;width:59px;height:23px;background:#f0f0f0;border:1px solid #a8a8a8;box-sizing:border-box;"></div>
<div class="a" style="left:754px;top:181px;width:57px;height:21px;border:1px solid #fbfbfb;box-sizing:border-box;"></div>
<div class="t" style="top:186px;left:582.5px;width:400px;text-align:center;">USB</div>
<div class="a" style="left:753px;top:206px;width:59px;height:23px;background:#f0f0f0;border:1px solid #a8a8a8;box-sizing:border-box;"></div>
<div class="a" style="left:754px;top:207px;width:57px;height:21px;border:1px solid #fbfbfb;box-sizing:border-box;"></div>
<div class="t" style="top:212px;left:582.5px;width:400px;text-align:center;">CPU</div>
<div class="a" style="left:753px;top:232px;width:59px;height:23px;background:#f0f0f0;border:1px solid #a8a8a8;box-sizing:border-box;"></div>
<div class="a" style="left:754px;top:233px;width:57px;height:21px;border:1px solid #fbfbfb;box-sizing:border-box;"></div>
<div class="t" style="top:238px;left:582.5px;width:400px;text-align:center;">IRQ</div>
<div class="a" style="left:860px;top:93px;width:452px;height:498px;background:#000;"></div>
<div class="a" style="left:861px;top:94px;width:450px;height:496px;background:#ffffff;"></div>
<div class="a" style="left:862px;top:95px;width:449px;height:495px;background:#f0f0f0;"></div>
<div class="a" style="left:861px;top:590px;width:451px;height:1px;background:#000;"></div>
<div class="a" style="left:862px;top:95px;width:448px;height:21px;background:#bfbfbf;"></div>
<div class="t" style="top:101px;left:866px;color:#f6f6f6;letter-spacing:-0.2px;">Interface &lt;ppp-Yota&gt;</div>
<div class="a" style="left:1275px;top:98px;width:15px;height:15px;background:#e6e6e6;border:1px solid #202020;box-sizing:border-box;"></div>
<div class="a" style="left:1276px;top:99px;width:13px;height:13px;border:1px solid #fafafa;box-sizing:border-box;"></div>
<div class="a" style="left:1278px;top:101px;width:9px;height:9px;border:1px solid #111;box-sizing:border-box;border-top-width:2px;"></div>
<div class="a" style="left:1292px;top:98px;width:15px;height:15px;background:#e6e6e6;border:1px solid #202020;box-sizing:border-box;"></div>
<div class="a" style="left:1293px;top:99px;width:13px;height:13px;border:1px solid #fafafa;box-sizing:border-box;"></div>
<div class="a" style="left:1294px;top:100px;"><svg width="11" height="11" viewBox="0 0 11 11"><path d="M2 2L9 9M9 2L2 9" stroke="#111" stroke-width="2"/></svg></div>
<div class="a" style="left:863px;top:140px;width:333px;height:1px;background:#ffffff;"></div>
<div class="a" style="left:863px;top:140px;width:1px;height:426px;background:#ffffff;"></div>
<div class="a" style="left:1195px;top:140px;width:1px;height:426px;background:#a0a0a0;"></div>
<div class="a" style="left:863px;top:565px;width:333px;height:1px;background:#a0a0a0;"></div>
<div class="a" style="left:866px;top:120px;width:48px;height:19px;background:#d9d9d9;"></div>
<div class="t" style="top:124px;left:690.0px;width:400px;text-align:center;">General</div>
<div class="a" style="left:915px;top:120px;width:30px;height:19px;background:#d9d9d9;"></div>
<div class="t" style="top:124px;left:730.0px;width:400px;text-align:center;">PPP</div>
<div class="a" style="left:991px;top:120px;width:40px;height:19px;background:#d9d9d9;"></div>
<div class="t" style="top:124px;left:811.0px;width:400px;text-align:center;">Traffic</div>
<div class="a" style="left:945px;top:117px;width:46px;height:24px;background:#f0f0f0;"></div>
<div class="a" style="left:945px;top:117px;width:1px;height:23px;background:#ffffff;"></div>
<div class="a" style="left:945px;top:117px;width:46px;height:1px;background:#ffffff;"></div>
<div class="a" style="left:991px;top:117px;width:1px;height:23px;background:#a0a0a0;"></div>
<div class="t" style="top:122px;left:768.5px;width:400px;text-align:center;">Status</div>
<div class="t" style="top:152px;left:575px;width:400px;text-align:right;">Last Link Down Time:</div>
<div class="a" style="left:981px;top:148px;width:206px;height:18px;background:#f0f0f0;border:1px solid #a3a3a3;box-sizing:border-box;"></div>
<div class="t" style="top:177px;left:575px;width:400px;text-align:right;">Last Link Up Time:</div>
<div class="a" style="left:981px;top:173px;width:206px;height:18px;background:#f0f0f0;border:1px solid #a3a3a3;box-sizing:border-box;"></div>
<div class="t" style="top:177px;left:984px;color:#000;">May<i class="sl">/</i>05<i class="sl">/</i>2018 21:56:03</div>
<div class="t" style="top:202px;left:575px;width:400px;text-align:right;">Link Downs:</div>
<div class="a" style="left:981px;top:198px;width:206px;height:18px;background:#f0f0f0;border:1px solid #a3a3a3;box-sizing:border-box;"></div>
<div class="t" style="top:202px;left:984px;color:#000;">0</div>
<div class="t" style="top:237px;left:575px;width:400px;text-align:right;">Uptime:</div>
<div class="a" style="left:981px;top:233px;width:206px;height:18px;background:#f0f0f0;border:1px solid #a3a3a3;box-sizing:border-box;"></div>
<div class="t" style="top:237px;left:984px;color:#000;">00:08:48</div>
<div class="t" style="top:262px;left:575px;width:400px;text-align:right;">Encoding:</div>
<div class="a" style="left:981px;top:258px;width:206px;height:18px;background:#f0f0f0;border:1px solid #a3a3a3;box-sizing:border-box;"></div>
<div class="t" style="top:297px;left:575px;width:400px;text-align:right;">MTU:</div>
<div class="a" style="left:981px;top:293px;width:206px;height:18px;background:#f0f0f0;border:1px solid #a3a3a3;box-sizing:border-box;"></div>
<div class="t" style="top:297px;left:984px;color:#000;">1400</div>
<div class="t" style="top:322px;left:575px;width:400px;text-align:right;">MRU:</div>
<div class="a" style="left:981px;top:318px;width:206px;height:18px;background:#f0f0f0;border:1px solid #a3a3a3;box-sizing:border-box;"></div>
<div class="t" style="top:322px;left:984px;color:#000;">1400</div>
<div class="t" style="top:357px;left:575px;width:400px;text-align:right;">Local Address:</div>
<div class="a" style="left:981px;top:353px;width:206px;height:18px;background:#f0f0f0;border:1px solid #a3a3a3;box-sizing:border-box;"></div>
<div class="t" style="top:357px;left:984px;color:#000;">10.55.143.181</div>
<div class="t" style="top:382px;left:575px;width:400px;text-align:right;">Remote Address:</div>
<div class="a" style="left:981px;top:378px;width:206px;height:18px;background:#f0f0f0;border:1px solid #a3a3a3;box-sizing:border-box;"></div>
<div class="t" style="top:407px;left:575px;width:400px;text-align:right;">Connect Speed:</div>
<div class="a" style="left:981px;top:403px;width:206px;height:18px;background:#f0f0f0;border:1px solid #a3a3a3;box-sizing:border-box;"></div>
<div class="t" style="top:407px;left:984px;color:#000;">115200</div>
<div class="a" style="left:872px;top:225px;width:315px;height:1px;background:#d9d9d9;"></div>
<div class="a" style="left:872px;top:226px;width:315px;height:1px;background:#ffffff;"></div>
<div class="a" style="left:872px;top:285px;width:315px;height:1px;background:#d9d9d9;"></div>
<div class="a" style="left:872px;top:286px;width:315px;height:1px;background:#ffffff;"></div>
<div class="a" style="left:872px;top:345px;width:315px;height:1px;background:#d9d9d9;"></div>
<div class="a" style="left:872px;top:346px;width:315px;height:1px;background:#ffffff;"></div>
<div class="a" style="left:1206px;top:121px;width:98px;height:23px;background:#f0f0f0;border:1px solid #101010;box-sizing:border-box;"></div>
<div class="a" style="left:1207px;top:122px;width:96px;height:21px;border:1px solid #ffffff;box-sizing:border-box;"></div>
<div class="t" style="top:127px;left:1055.0px;width:400px;text-align:center;">OK</div>
<div class="a" style="left:1206px;top:147px;width:98px;height:23px;background:#f0f0f0;border:1px solid #a8a8a8;box-sizing:border-box;"></div>
<div class="a" style="left:1207px;top:148px;width:96px;height:21px;border:1px solid #fbfbfb;box-sizing:border-box;"></div>
<div class="t" style="top:153px;left:1055.0px;width:400px;text-align:center;">Cancel</div>
<div class="a" style="left:1206px;top:173px;width:98px;height:23px;background:#f0f0f0;border:1px solid #a8a8a8;box-sizing:border-box;"></div>
<div class="a" style="left:1207px;top:174px;width:96px;height:21px;border:1px solid #fbfbfb;box-sizing:border-box;"></div>
<div class="t" style="top:179px;left:1055.0px;width:400px;text-align:center;">Apply</div>
<div class="a" style="left:1206px;top:205px;width:98px;height:23px;background:#f0f0f0;border:1px solid #a8a8a8;box-sizing:border-box;"></div>
<div class="a" style="left:1207px;top:206px;width:96px;height:21px;border:1px solid #fbfbfb;box-sizing:border-box;"></div>
<div class="t" style="top:211px;left:1055.0px;width:400px;text-align:center;">Disable</div>
<div class="a" style="left:1206px;top:231px;width:98px;height:23px;background:#f0f0f0;border:1px solid #a8a8a8;box-sizing:border-box;"></div>
<div class="a" style="left:1207px;top:232px;width:96px;height:21px;border:1px solid #fbfbfb;box-sizing:border-box;"></div>
<div class="t" style="top:237px;left:1055.0px;width:400px;text-align:center;">Comment</div>
<div class="a" style="left:1206px;top:257px;width:98px;height:23px;background:#f0f0f0;border:1px solid #a8a8a8;box-sizing:border-box;"></div>
<div class="a" style="left:1207px;top:258px;width:96px;height:21px;border:1px solid #fbfbfb;box-sizing:border-box;"></div>
<div class="t" style="top:263px;left:1055.0px;width:400px;text-align:center;">Copy</div>
<div class="a" style="left:1206px;top:283px;width:98px;height:23px;background:#f0f0f0;border:1px solid #a8a8a8;box-sizing:border-box;"></div>
<div class="a" style="left:1207px;top:284px;width:96px;height:21px;border:1px solid #fbfbfb;box-sizing:border-box;"></div>
<div class="t" style="top:289px;left:1055.0px;width:400px;text-align:center;">Remove</div>
<div class="a" style="left:1206px;top:309px;width:98px;height:23px;background:#f0f0f0;border:1px solid #a8a8a8;box-sizing:border-box;"></div>
<div class="a" style="left:1207px;top:310px;width:96px;height:21px;border:1px solid #fbfbfb;box-sizing:border-box;"></div>
<div class="t" style="top:315px;left:1055.0px;width:400px;text-align:center;">Advanced Mode</div>
<div class="a" style="left:1206px;top:335px;width:98px;height:23px;background:#f0f0f0;border:1px solid #a8a8a8;box-sizing:border-box;"></div>
<div class="a" style="left:1207px;top:336px;width:96px;height:21px;border:1px solid #fbfbfb;box-sizing:border-box;"></div>
<div class="t" style="top:341px;left:1055.0px;width:400px;text-align:center;">Torch</div>
<div class="a" style="left:1206px;top:361px;width:98px;height:23px;background:#f0f0f0;border:1px solid #a8a8a8;box-sizing:border-box;"></div>
<div class="a" style="left:1207px;top:362px;width:96px;height:21px;border:1px solid #fbfbfb;box-sizing:border-box;"></div>
<div class="t" style="top:367px;left:1055.0px;width:400px;text-align:center;">Scan...</div>
<div class="a" style="left:1206px;top:387px;width:98px;height:23px;background:#f0f0f0;border:1px solid #a8a8a8;box-sizing:border-box;"></div>
<div class="a" style="left:1207px;top:388px;width:96px;height:21px;border:1px solid #fbfbfb;box-sizing:border-box;"></div>
<div class="t" style="top:393px;left:1055.0px;width:400px;text-align:center;">Info...</div>
<div class="a" style="left:863px;top:568px;width:1px;height:19px;background:#a0a0a0;"></div>
<div class="a" style="left:863px;top:568px;width:104px;height:1px;background:#d8d8d8;"></div>
<div class="a" style="left:966px;top:568px;width:1px;height:19px;background:#ffffff;"></div>
<div class="a" style="left:863px;top:586px;width:104px;height:1px;background:#ffffff;"></div>
<div class="t" style="top:572px;left:866px;color:#000;">enabled</div>
<div class="a" style="left:969px;top:568px;width:1px;height:19px;background:#a0a0a0;"></div>
<div class="a" style="left:969px;top:568px;width:104px;height:1px;background:#d8d8d8;"></div>
<div class="a" style="left:1072px;top:568px;width:1px;height:19px;background:#ffffff;"></div>
<div class="a" style="left:969px;top:586px;width:104px;height:1px;background:#ffffff;"></div>
<div class="t" style="top:572px;left:972px;color:#000;">running</div>
<div class="a" style="left:1075px;top:568px;width:1px;height:19px;background:#a0a0a0;"></div>
<div class="a" style="left:1075px;top:568px;width:104px;height:1px;background:#d8d8d8;"></div>
<div class="a" style="left:1178px;top:568px;width:1px;height:19px;background:#ffffff;"></div>
<div class="a" style="left:1075px;top:586px;width:104px;height:1px;background:#ffffff;"></div>
<div class="t" style="top:572px;left:1078px;color:#a8a8a8;">slave</div>
<div class="a" style="left:1181px;top:568px;width:1px;height:19px;background:#a0a0a0;"></div>
<div class="a" style="left:1181px;top:568px;width:126px;height:1px;background:#d8d8d8;"></div>
<div class="a" style="left:1306px;top:568px;width:1px;height:19px;background:#ffffff;"></div>
<div class="a" style="left:1181px;top:586px;width:126px;height:1px;background:#ffffff;"></div>
<div class="t" style="top:572px;left:1184px;color:#000;">Status: connected</div>
<div class="a" style="left:970px;top:352px;width:149px;height:24px;border:1px solid #3cbf5c;box-sizing:border-box;"></div>
<div class="a" style="left:288px;top:482px;width:445px;height:260px;background:#000;"></div>
<div class="a" style="left:289px;top:483px;width:443px;height:258px;background:#ffffff;"></div>
<div class="a" style="left:290px;top:484px;width:442px;height:257px;background:#f0f0f0;"></div>
<div class="a" style="left:289px;top:741px;width:444px;height:1px;background:#000;"></div>
<div class="a" style="left:290px;top:484px;width:441px;height:21px;background:#bfbfbf;"></div>
<div class="t" style="top:490px;left:294px;color:#f6f6f6;letter-spacing:-0.2px;">Port List</div>
<div class="a" style="left:696px;top:487px;width:15px;height:15px;background:#e6e6e6;border:1px solid #202020;box-sizing:border-box;"></div>
<div class="a" style="left:697px;top:488px;width:13px;height:13px;border:1px solid #fafafa;box-sizing:border-box;"></div>
<div class="a" style="left:699px;top:490px;width:9px;height:9px;border:1px solid #111;box-sizing:border-box;border-top-width:2px;"></div>
<div class="a" style="left:713px;top:487px;width:15px;height:15px;background:#e6e6e6;border:1px solid #202020;box-sizing:border-box;"></div>
<div class="a" style="left:714px;top:488px;width:13px;height:13px;border:1px solid #fafafa;box-sizing:border-box;"></div>
<div class="a" style="left:715px;top:489px;"><svg width="11" height="11" viewBox="0 0 11 11"><path d="M2 2L9 9M9 2L2 9" stroke="#111" stroke-width="2"/></svg></div>
<div class="a" style="left:290px;top:528px;width:439px;height:1px;background:#ffffff;"></div>
<div class="a" style="left:290px;top:528px;width:1px;height:200px;background:#ffffff;"></div>
<div class="a" style="left:728px;top:528px;width:1px;height:200px;background:#a0a0a0;"></div>
<div class="a" style="left:290px;top:727px;width:439px;height:1px;background:#a0a0a0;"></div>
<div class="a" style="left:331px;top:510px;width:84px;height:19px;background:#d9d9d9;"></div>
<div class="t" style="top:514px;left:173.0px;width:400px;text-align:center;">Remote Access</div>
<div class="a" style="left:292px;top:507px;width:39px;height:24px;background:#f0f0f0;"></div>
<div class="a" style="left:292px;top:507px;width:1px;height:23px;background:#ffffff;"></div>
<div class="a" style="left:292px;top:507px;width:39px;height:1px;background:#ffffff;"></div>
<div class="a" style="left:331px;top:507px;width:1px;height:23px;background:#a0a0a0;"></div>
<div class="t" style="top:512px;left:112.0px;width:400px;text-align:center;">Ports</div>
<div class="a" style="left:293px;top:533px;width:23px;height:23px;background:#f0f0f0;border:1px solid #a8a8a8;box-sizing:border-box;"></div>
<div class="a" style="left:294px;top:534px;width:21px;height:21px;border:1px solid #fbfbfb;box-sizing:border-box;"></div>
<div class="a" style="left:299px;top:542px;width:12px;height:5px;background:#b81828;border:1px solid #4a1010;box-sizing:border-box;"></div>
<div class="a" style="left:325px;top:533px;width:23px;height:23px;background:#f0f0f0;border:1px solid #a8a8a8;box-sizing:border-box;"></div>
<div class="a" style="left:326px;top:534px;width:21px;height:21px;border:1px solid #fbfbfb;box-sizing:border-box;"></div>
<div class="a" style="left:329px;top:537px;"><svg width="14" height="14" viewBox="0 0 14 14"><defs><linearGradient id="fg" x1="0" x2="1"><stop offset="0" stop-color="#6a7088"/><stop offset="0.5" stop-color="#c8ccd8"/><stop offset="1" stop-color="#6a7088"/></linearGradient></defs><path d="M1.5 2h11l-4 4.5v6.2h-3V6.5z" fill="url(#fg)" stroke="#111" stroke-width="1.2" stroke-linejoin="round"/></svg></div>
<div class="a" style="left:357px;top:533px;width:61px;height:23px;background:#f0f0f0;border:1px solid #a8a8a8;box-sizing:border-box;"></div>
<div class="a" style="left:358px;top:534px;width:59px;height:21px;border:1px solid #fbfbfb;box-sizing:border-box;"></div>
<div class="t" style="top:539px;left:187.5px;width:400px;text-align:center;">Firmware</div>
<div class="a" style="left:666px;top:538px;width:60px;height:18px;background:#ffffff;border:1px solid #b8b8b8;box-sizing:border-box;"></div>
<div class="t" style="top:542px;left:671px;color:#b4b4b4;font-style:italic;">Find</div>
<div class="a" style="left:293px;top:559px;width:434px;height:200px;background:#ffffff;border:1px solid #a0a0a0;box-sizing:border-box;"></div>
<div class="a" style="left:294px;top:560px;width:432px;height:16px;background:#f0f0f0;"></div>
<div class="a" style="left:294px;top:576px;width:432px;height:1px;background:#a0a0a0;"></div>
<div class="a" style="left:303px;top:560px;width:1px;height:16px;background:#c4c4c4;"></div>
<div class="a" style="left:403px;top:560px;width:1px;height:16px;background:#c4c4c4;"></div>
<div class="a" style="left:503px;top:560px;width:1px;height:16px;background:#c4c4c4;"></div>
<div class="a" style="left:553px;top:560px;width:1px;height:16px;background:#c4c4c4;"></div>
<div class="a" style="left:623px;top:560px;width:1px;height:16px;background:#c4c4c4;"></div>
<div class="a" style="left:703px;top:560px;width:1px;height:16px;background:#c4c4c4;"></div>
<div class="a" style="left:709px;top:560px;width:1px;height:16px;background:#c4c4c4;"></div>
<div class="a" style="left:303px;top:577px;width:1px;height:30px;background:#e6e6e6;"></div>
<div class="a" style="left:403px;top:577px;width:1px;height:30px;background:#e6e6e6;"></div>
<div class="a" style="left:503px;top:577px;width:1px;height:30px;background:#e6e6e6;"></div>
<div class="a" style="left:553px;top:577px;width:1px;height:30px;background:#e6e6e6;"></div>
<div class="a" style="left:623px;top:577px;width:1px;height:30px;background:#e6e6e6;"></div>
<div class="a" style="left:703px;top:577px;width:1px;height:30px;background:#e6e6e6;"></div>
<div class="a" style="left:294px;top:591px;width:432px;height:1px;background:#e6e6e6;"></div>
<div class="a" style="left:294px;top:606px;width:432px;height:1px;background:#e6e6e6;"></div>
<div class="t" style="top:563px;left:306px;">Name</div>
<div class="a" style="left:393px;top:564px;"><svg width="6" height="8" viewBox="0 0 6 8"><path d="M1 7.5L5 0.5" stroke="#a0a0a0" stroke-width="1"/></svg></div>
<div class="t" style="top:563px;left:406px;">Used By</div>
<div class="t" style="top:563px;left:506px;">Channels</div>
<div class="t" style="top:563px;left:556px;">Baud Rate</div>
<div class="t" style="top:563px;left:626px;">Flow Control</div>
<div class="a" style="left:712px;top:565px;"><svg width="11" height="7" viewBox="0 0 11 7"><path d="M0 0h11L5.5 6.5z" fill="#000"/></svg></div>
<div class="a" style="left:294px;top:592px;width:432px;height:14px;background:#99bbe8;"></div>
<div class="a" style="left:303px;top:592px;width:1px;height:14px;background:#b0c8ea;"></div>
<div class="a" style="left:403px;top:592px;width:1px;height:14px;background:#b0c8ea;"></div>
<div class="a" style="left:503px;top:592px;width:1px;height:14px;background:#b0c8ea;"></div>
<div class="a" style="left:553px;top:592px;width:1px;height:14px;background:#b0c8ea;"></div>
<div class="a" style="left:623px;top:592px;width:1px;height:14px;background:#b0c8ea;"></div>
<div class="a" style="left:703px;top:592px;width:1px;height:14px;background:#b0c8ea;"></div>
<div class="t" style="top:578px;left:296px;color:#e0303c;">I</div>
<div class="t" style="top:578px;left:321px;color:#e0303c;">serial0</div>
<div class="t" style="top:578px;left:151px;width:400px;text-align:right;color:#e0303c;">1</div>
<div class="t" style="top:578px;left:556px;color:#e0303c;">115200</div>
<div class="t" style="top:578px;left:626px;color:#e0303c;">none</div>
<div class="t" style="top:593px;left:321px;color:#001040;">usb1</div>
<div class="t" style="top:593px;left:406px;color:#001040;">PPP &lt;ppp-Yota&gt;</div>
<div class="t" style="top:593px;left:151px;width:400px;text-align:right;color:#001040;">7</div>
<div class="t" style="top:593px;left:556px;color:#001040;">9600</div>
<div class="t" style="top:593px;left:626px;color:#001040;">none</div>
<div class="a" style="left:306px;top:578px;"><svg width="15" height="13" viewBox="0 0 13 13" preserveAspectRatio="none"><path d="M4 1.5h7.5a1.3 1.3 0 0 1 0 2.6H4a1.3 1.3 0 0 1 0-2.6z" fill="#f0e070" stroke="#111" stroke-width="1"/><path d="M2 6.5h7a1.3 1.3 0 0 1 0 2.6H2a1.3 1.3 0 0 1 0-2.6z" fill="#bbb" stroke="#111" stroke-width="1"/><path d="M3 9.5v2M4.5 9.5v2" stroke="#111"/></svg></div>
<div class="a" style="left:306px;top:593px;"><svg width="15" height="13" viewBox="0 0 13 13" preserveAspectRatio="none"><path d="M4 1.5h7.5a1.3 1.3 0 0 1 0 2.6H4a1.3 1.3 0 0 1 0-2.6z" fill="#f0e070" stroke="#111" stroke-width="1"/><path d="M2 6.5h7a1.3 1.3 0 0 1 0 2.6H2a1.3 1.3 0 0 1 0-2.6z" fill="#bbb" stroke="#111" stroke-width="1"/><path d="M3 9.5v2M4.5 9.5v2" stroke="#111"/></svg></div>
<div class="a" style="left:152px;top:673px;width:692px;height:320px;background:#000;"></div>
<div class="a" style="left:153px;top:674px;width:690px;height:318px;background:#ffffff;"></div>
<div class="a" style="left:154px;top:675px;width:689px;height:317px;background:#f0f0f0;"></div>
<div class="a" style="left:153px;top:992px;width:691px;height:1px;background:#000;"></div>
<div class="a" style="left:154px;top:675px;width:688px;height:21px;background:#bfbfbf;"></div>
<div class="t" style="top:681px;left:158px;color:#f6f6f6;letter-spacing:-0.2px;">USB</div>
<div class="a" style="left:807px;top:678px;width:15px;height:15px;background:#e6e6e6;border:1px solid #202020;box-sizing:border-box;"></div>
<div class="a" style="left:808px;top:679px;width:13px;height:13px;border:1px solid #fafafa;box-sizing:border-box;"></div>
<div class="a" style="left:810px;top:681px;width:9px;height:9px;border:1px solid #111;box-sizing:border-box;border-top-width:2px;"></div>
<div class="a" style="left:824px;top:678px;width:15px;height:15px;background:#e6e6e6;border:1px solid #202020;box-sizing:border-box;"></div>
<div class="a" style="left:825px;top:679px;width:13px;height:13px;border:1px solid #fafafa;box-sizing:border-box;"></div>
<div class="a" style="left:826px;top:680px;"><svg width="11" height="11" viewBox="0 0 11 11"><path d="M2 2L9 9M9 2L2 9" stroke="#111" stroke-width="2"/></svg></div>
<div class="a" style="left:155px;top:699px;width:23px;height:23px;background:#f0f0f0;border:1px solid #a8a8a8;box-sizing:border-box;"></div>
<div class="a" style="left:156px;top:700px;width:21px;height:21px;border:1px solid #fbfbfb;box-sizing:border-box;"></div>
<div class="a" style="left:159px;top:703px;"><svg width="14" height="14" viewBox="0 0 14 14"><defs><linearGradient id="fg" x1="0" x2="1"><stop offset="0" stop-color="#6a7088"/><stop offset="0.5" stop-color="#c8ccd8"/><stop offset="1" stop-color="#6a7088"/></linearGradient></defs><path d="M1.5 2h11l-4 4.5v6.2h-3V6.5z" fill="url(#fg)" stroke="#111" stroke-width="1.2" stroke-linejoin="round"/></svg></div>
<div class="a" style="left:778px;top:704px;width:60px;height:18px;background:#ffffff;border:1px solid #b8b8b8;box-sizing:border-box;"></div>
<div class="t" style="top:708px;left:783px;color:#b4b4b4;font-style:italic;">Find</div>
<div class="a" style="left:156px;top:725px;width:683px;height:244px;background:#ffffff;border:1px solid #a0a0a0;box-sizing:border-box;"></div>
<div class="a" style="left:157px;top:726px;width:681px;height:16px;background:#f0f0f0;"></div>
<div class="a" style="left:157px;top:742px;width:681px;height:1px;background:#a0a0a0;"></div>
<div class="a" style="left:160px;top:726px;width:1px;height:16px;background:#c4c4c4;"></div>
<div class="a" style="left:220px;top:726px;width:1px;height:16px;background:#c4c4c4;"></div>
<div class="a" style="left:320px;top:726px;width:1px;height:16px;background:#c4c4c4;"></div>
<div class="a" style="left:470px;top:726px;width:1px;height:16px;background:#c4c4c4;"></div>
<div class="a" style="left:595px;top:726px;width:1px;height:16px;background:#c4c4c4;"></div>
<div class="a" style="left:645px;top:726px;width:1px;height:16px;background:#c4c4c4;"></div>
<div class="a" style="left:822px;top:726px;width:1px;height:16px;background:#c4c4c4;"></div>
<div class="a" style="left:160px;top:743px;width:1px;height:45px;background:#e6e6e6;"></div>
<div class="a" style="left:220px;top:743px;width:1px;height:45px;background:#e6e6e6;"></div>
<div class="a" style="left:320px;top:743px;width:1px;height:45px;background:#e6e6e6;"></div>
<div class="a" style="left:470px;top:743px;width:1px;height:45px;background:#e6e6e6;"></div>
<div class="a" style="left:595px;top:743px;width:1px;height:45px;background:#e6e6e6;"></div>
<div class="a" style="left:645px;top:743px;width:1px;height:45px;background:#e6e6e6;"></div>
<div class="a" style="left:157px;top:757px;width:681px;height:1px;background:#e6e6e6;"></div>
<div class="a" style="left:157px;top:772px;width:681px;height:1px;background:#e6e6e6;"></div>
<div class="a" style="left:157px;top:787px;width:681px;height:1px;background:#e6e6e6;"></div>
<div class="t" style="top:729px;left:163px;">Device</div>
<div class="a" style="left:210px;top:730px;"><svg width="6" height="8" viewBox="0 0 6 8"><path d="M1 7.5L5 0.5" stroke="#a0a0a0" stroke-width="1"/></svg></div>
<div class="t" style="top:729px;left:223px;">Vendor</div>
<div class="t" style="top:729px;left:323px;">Name</div>
<div class="t" style="top:729px;left:473px;">Serial Number</div>
<div class="t" style="top:729px;left:598px;">Speed</div>
<div class="a" style="left:825px;top:731px;"><svg width="11" height="7" viewBox="0 0 11 7"><path d="M0 0h11L5.5 6.5z" fill="#000"/></svg></div>
<div class="t" style="top:744px;left:163px;">1:1</div>
<div class="t" style="top:744px;left:223px;">Linux 3.3.5 xhci-h...</div>
<div class="t" style="top:744px;left:323px;">xHCI Host Controller</div>
<div class="t" style="top:744px;left:473px;">xhci-hcd-ipq40xx.0</div>
<div class="t" style="top:744px;left:598px;">480 Mb</div>
<div class="t" style="top:759px;left:163px;">1:2</div>
<div class="t" style="top:759px;left:223px;">SimTech, Incorpo...</div>
<div class="t" style="top:759px;left:323px;">SimTech, Incorporated</div>
<div class="t" style="top:759px;left:473px;">0123456789ABCDEF</div>
<div class="t" style="top:759px;left:598px;">480 Mb</div>
<div class="t" style="top:774px;left:163px;">2:1</div>
<div class="t" style="top:774px;left:223px;">Linux 3.3.5 xhci-h...</div>
<div class="t" style="top:774px;left:323px;">xHCI Host Controller</div>
<div class="t" style="top:774px;left:473px;">xhci-hcd-ipq40xx.0</div>
<div class="t" style="top:774px;left:598px;">5000 M</div>
<div class="a" style="left:156px;top:969px;width:1px;height:19px;background:#a0a0a0;"></div>
<div class="a" style="left:156px;top:969px;width:683px;height:1px;background:#d8d8d8;"></div>
<div class="a" style="left:838px;top:969px;width:1px;height:19px;background:#ffffff;"></div>
<div class="a" style="left:156px;top:987px;width:683px;height:1px;background:#ffffff;"></div>
<div class="t" style="top:972px;left:159px;color:#000;">3 items</div>
<div class="a" style="left:851px;top:625px;width:600px;height:346px;background:#000;"></div>
<div class="a" style="left:852px;top:626px;width:598px;height:344px;background:#ffffff;"></div>
<div class="a" style="left:853px;top:627px;width:597px;height:343px;background:#f0f0f0;"></div>
<div class="a" style="left:852px;top:970px;width:599px;height:1px;background:#000;"></div>
<div class="a" style="left:853px;top:627px;width:596px;height:21px;background:#bfbfbf;"></div>
<div class="t" style="top:633px;left:857px;color:#f6f6f6;letter-spacing:-0.2px;">Interface List</div>
<div class="a" style="left:1414px;top:630px;width:15px;height:15px;background:#e6e6e6;border:1px solid #202020;box-sizing:border-box;"></div>
<div class="a" style="left:1415px;top:631px;width:13px;height:13px;border:1px solid #fafafa;box-sizing:border-box;"></div>
<div class="a" style="left:1417px;top:633px;width:9px;height:9px;border:1px solid #111;box-sizing:border-box;border-top-width:2px;"></div>
<div class="a" style="left:1431px;top:630px;width:15px;height:15px;background:#e6e6e6;border:1px solid #202020;box-sizing:border-box;"></div>
<div class="a" style="left:1432px;top:631px;width:13px;height:13px;border:1px solid #fafafa;box-sizing:border-box;"></div>
<div class="a" style="left:1433px;top:632px;"><svg width="11" height="11" viewBox="0 0 11 11"><path d="M2 2L9 9M9 2L2 9" stroke="#111" stroke-width="2"/></svg></div>
<div class="a" style="left:853px;top:672px;width:594px;height:1px;background:#ffffff;"></div>
<div class="a" style="left:853px;top:672px;width:1px;height:294px;background:#ffffff;"></div>
<div class="a" style="left:1446px;top:672px;width:1px;height:294px;background:#a0a0a0;"></div>
<div class="a" style="left:1446px;top:672px;width:1px;height:294px;background:#d0d0d0;"></div>
<div class="a" style="left:912px;top:653px;width:70px;height:19px;background:#d9d9d9;"></div>
<div class="t" style="top:657px;left:747.0px;width:400px;text-align:center;">Interface List</div>
<div class="a" style="left:983px;top:653px;width:52px;height:19px;background:#d9d9d9;"></div>
<div class="t" style="top:657px;left:809.0px;width:400px;text-align:center;">Ethernet</div>
<div class="a" style="left:1036px;top:653px;width:70px;height:19px;background:#d9d9d9;"></div>
<div class="t" style="top:657px;left:871.0px;width:400px;text-align:center;">EoIP Tunnel</div>
<div class="a" style="left:1107px;top:653px;width:57px;height:19px;background:#d9d9d9;"></div>
<div class="t" style="top:657px;left:935.5px;width:400px;text-align:center;">IP Tunnel</div>
<div class="a" style="left:1165px;top:653px;width:70px;height:19px;background:#d9d9d9;"></div>
<div class="t" style="top:657px;left:1000.0px;width:400px;text-align:center;">GRE Tunnel</div>
<div class="a" style="left:1236px;top:653px;width:39px;height:19px;background:#d9d9d9;"></div>
<div class="t" style="top:657px;left:1055.5px;width:400px;text-align:center;">VLAN</div>
<div class="a" style="left:1276px;top:653px;width:41px;height:19px;background:#d9d9d9;"></div>
<div class="t" style="top:657px;left:1096.5px;width:400px;text-align:center;">VRRP</div>
<div class="a" style="left:1318px;top:653px;width:50px;height:19px;background:#d9d9d9;"></div>
<div class="t" style="top:657px;left:1143.0px;width:400px;text-align:center;">Bonding</div>
<div class="a" style="left:1369px;top:653px;width:30px;height:19px;background:#d9d9d9;"></div>
<div class="t" style="top:657px;left:1184.0px;width:400px;text-align:center;">LTE</div>
<div class="a" style="left:855px;top:650px;width:57px;height:24px;background:#f0f0f0;"></div>
<div class="a" style="left:855px;top:650px;width:1px;height:23px;background:#ffffff;"></div>
<div class="a" style="left:855px;top:650px;width:57px;height:1px;background:#ffffff;"></div>
<div class="a" style="left:912px;top:650px;width:1px;height:23px;background:#a0a0a0;"></div>
<div class="t" style="top:655px;left:684.0px;width:400px;text-align:center;">Interface</div>
<div class="a" style="left:856px;top:676px;width:31px;height:23px;background:#f0f0f0;border:1px solid #a8a8a8;box-sizing:border-box;"></div>
<div class="a" style="left:857px;top:677px;width:29px;height:21px;border:1px solid #fbfbfb;box-sizing:border-box;"></div>
<div class="a" style="left:861px;top:681px;"><svg width="22" height="13" viewBox="0 0 22 13"><path d="M5.5 1v11M0.5 6.5h10" stroke="#0c1488" stroke-width="3.2"/><path d="M14 5h7l-3.5 4z" fill="#000"/></svg></div>
<div class="a" style="left:890px;top:676px;width:23px;height:23px;background:#f0f0f0;border:1px solid #a8a8a8;box-sizing:border-box;"></div>
<div class="a" style="left:891px;top:677px;width:21px;height:21px;border:1px solid #fbfbfb;box-sizing:border-box;"></div>
<div class="a" style="left:896px;top:685px;width:12px;height:4px;background:#7a1c1c;border:1px solid #5a1010;box-sizing:border-box;"></div>
<div class="a" style="left:922px;top:676px;width:23px;height:23px;background:#f0f0f0;border:1px solid #a8a8a8;box-sizing:border-box;"></div>
<div class="a" style="left:923px;top:677px;width:21px;height:21px;border:1px solid #fbfbfb;box-sizing:border-box;"></div>
<div class="a" style="left:927px;top:681px;"><svg width="13" height="13" viewBox="0 0 13 13"><path d="M1.5 6.5L5 10L11.5 2.5" stroke="#0c1488" stroke-width="2.6" fill="none"/></svg></div>
<div class="a" style="left:948px;top:676px;width:23px;height:23px;background:#f0f0f0;border:1px solid #a8a8a8;box-sizing:border-box;"></div>
<div class="a" style="left:949px;top:677px;width:21px;height:21px;border:1px solid #fbfbfb;box-sizing:border-box;"></div>
<div class="a" style="left:953px;top:681px;"><svg width="13" height="13" viewBox="0 0 13 13"><path d="M2.5 2.5L10.5 10.5M10.5 2.5L2.5 10.5" stroke="#a82020" stroke-width="3.2"/></svg></div>
<div class="a" style="left:980px;top:676px;width:23px;height:23px;background:#f0f0f0;border:1px solid #a8a8a8;box-sizing:border-box;"></div>
<div class="a" style="left:981px;top:677px;width:21px;height:21px;border:1px solid #fbfbfb;box-sizing:border-box;"></div>
<div class="a" style="left:985px;top:683px;"><svg width="14" height="11" viewBox="0 0 14 11"><path d="M3.5 0.5h9.5v9.5H0.5V3.5z" fill="#f4f030" stroke="#222" stroke-width="1"/><path d="M3.5 0.5v3H0.5" fill="none" stroke="#222" stroke-width="0.8"/><path d="M6 3h2M9.5 3h2" stroke="#c8c030" stroke-width="0.8"/></svg></div>
<div class="a" style="left:1012px;top:676px;width:23px;height:23px;background:#f0f0f0;border:1px solid #a8a8a8;box-sizing:border-box;"></div>
<div class="a" style="left:1013px;top:677px;width:21px;height:21px;border:1px solid #fbfbfb;box-sizing:border-box;"></div>
<div class="a" style="left:1016px;top:680px;"><svg width="14" height="14" viewBox="0 0 14 14"><defs><linearGradient id="fg" x1="0" x2="1"><stop offset="0" stop-color="#6a7088"/><stop offset="0.5" stop-color="#c8ccd8"/><stop offset="1" stop-color="#6a7088"/></linearGradient></defs><path d="M1.5 2h11l-4 4.5v6.2h-3V6.5z" fill="url(#fg)" stroke="#111" stroke-width="1.2" stroke-linejoin="round"/></svg></div>
<div class="a" style="left:1384px;top:681px;width:60px;height:18px;background:#ffffff;border:1px solid #b8b8b8;box-sizing:border-box;"></div>
<div class="t" style="top:685px;left:1389px;color:#b4b4b4;font-style:italic;">Find</div>
<div class="a" style="left:856px;top:702px;width:589px;height:244px;background:#ffffff;border:1px solid #a0a0a0;box-sizing:border-box;"></div>
<div class="a" style="left:857px;top:703px;width:587px;height:16px;background:#f0f0f0;"></div>
<div class="a" style="left:857px;top:719px;width:587px;height:1px;background:#a0a0a0;"></div>
<div class="a" style="left:876px;top:703px;width:1px;height:16px;background:#c4c4c4;"></div>
<div class="a" style="left:976px;top:703px;width:1px;height:16px;background:#c4c4c4;"></div>
<div class="a" style="left:1096px;top:703px;width:1px;height:16px;background:#c4c4c4;"></div>
<div class="a" style="left:1166px;top:703px;width:1px;height:16px;background:#c4c4c4;"></div>
<div class="a" style="left:1216px;top:703px;width:1px;height:16px;background:#c4c4c4;"></div>
<div class="a" style="left:1336px;top:703px;width:1px;height:16px;background:#c4c4c4;"></div>
<div class="a" style="left:1428px;top:703px;width:1px;height:16px;background:#c4c4c4;"></div>
<div class="a" style="left:876px;top:720px;width:1px;height:210px;background:#e6e6e6;"></div>
<div class="a" style="left:976px;top:720px;width:1px;height:210px;background:#e6e6e6;"></div>
<div class="a" style="left:1096px;top:720px;width:1px;height:210px;background:#e6e6e6;"></div>
<div class="a" style="left:1166px;top:720px;width:1px;height:210px;background:#e6e6e6;"></div>
<div class="a" style="left:1216px;top:720px;width:1px;height:210px;background:#e6e6e6;"></div>
<div class="a" style="left:1336px;top:720px;width:1px;height:210px;background:#e6e6e6;"></div>
<div class="a" style="left:1428px;top:720px;width:1px;height:210px;background:#e6e6e6;"></div>
<div class="a" style="left:857px;top:734px;width:571px;height:1px;background:#e6e6e6;"></div>
<div class="a" style="left:857px;top:749px;width:571px;height:1px;background:#e6e6e6;"></div>
<div class="a" style="left:857px;top:764px;width:571px;height:1px;background:#e6e6e6;"></div>
<div class="a" style="left:857px;top:779px;width:571px;height:1px;background:#e6e6e6;"></div>
<div class="a" style="left:857px;top:794px;width:571px;height:1px;background:#e6e6e6;"></div>
<div class="a" style="left:857px;top:809px;width:571px;height:1px;background:#e6e6e6;"></div>
<div class="a" style="left:857px;top:824px;width:571px;height:1px;background:#e6e6e6;"></div>
<div class="a" style="left:857px;top:839px;width:571px;height:1px;background:#e6e6e6;"></div>
<div class="a" style="left:857px;top:854px;width:571px;height:1px;background:#e6e6e6;"></div>
<div class="a" style="left:857px;top:869px;width:571px;height:1px;background:#e6e6e6;"></div>
<div class="a" style="left:857px;top:884px;width:571px;height:1px;background:#e6e6e6;"></div>
<div class="a" style="left:857px;top:899px;width:571px;height:1px;background:#e6e6e6;"></div>
<div class="a" style="left:857px;top:914px;width:571px;height:1px;background:#e6e6e6;"></div>
<div class="a" style="left:857px;top:929px;width:571px;height:1px;background:#e6e6e6;"></div>
<div class="t" style="top:706px;left:879px;">Name</div>
<div class="a" style="left:966px;top:707px;"><svg width="6" height="8" viewBox="0 0 6 8"><path d="M1 7.5L5 0.5" stroke="#a0a0a0" stroke-width="1"/></svg></div>
<div class="t" style="top:706px;left:979px;">Type</div>
<div class="t" style="top:706px;left:1099px;">Actual MTU</div>
<div class="t" style="top:706px;left:1169px;">L2 MTU</div>
<div class="t" style="top:706px;left:1219px;">Tx</div>
<div class="t" style="top:706px;left:1339px;">Rx</div>
<div class="a" style="left:1431px;top:708px;"><svg width="11" height="7" viewBox="0 0 11 7"><path d="M0 0h11L5.5 6.5z" fill="#000"/></svg></div>
<div class="t" style="top:721px;left:859px;color:#000;">R</div>
<div class="t" style="top:721px;left:895px;color:#000;">bridge-Local</div>
<div class="t" style="top:721px;left:979px;width:116px;overflow:hidden;color:#000;">Bridge</div>
<div class="t" style="top:721px;left:764px;width:400px;text-align:right;color:#000;">1500</div>
<div class="t" style="top:721px;left:814px;width:400px;text-align:right;color:#000;">1598</div>
<div class="t" style="top:721px;left:934px;width:400px;text-align:right;color:#000;">140.9 kbps</div>
<div class="a" style="left:1337px;top:720px;width:91px;height:15px;overflow:hidden;">
<div class="t" style="top:1px;left:-309px;width:400px;text-align:right;color:#000;">9.0</div>
</div>
<div class="a" style="left:879px;top:720px;"><svg width="16" height="13" viewBox="0 0 16 13"><path d="M4.5 1v10M11.5 1v10" stroke="#111" stroke-width="1.3"/><path d="M1 5l3.5-2.5h7L15 5" stroke="#111" stroke-width="0.9" fill="none"/><path d="M1.5 11h13M4.5 9h7" stroke="#6a1020" stroke-width="1.6"/></svg></div>
<div class="t" style="top:736px;left:859px;color:#000;">S</div>
<div class="t" style="top:736px;left:895px;color:#000;">ether1</div>
<div class="t" style="top:736px;left:979px;width:116px;overflow:hidden;color:#000;">Ethernet</div>
<div class="t" style="top:736px;left:764px;width:400px;text-align:right;color:#000;">1500</div>
<div class="t" style="top:736px;left:814px;width:400px;text-align:right;color:#000;">1598</div>
<div class="t" style="top:736px;left:934px;width:400px;text-align:right;color:#000;">0 bps</div>
<div class="a" style="left:880px;top:736px;"><svg width="15" height="12" viewBox="0 0 15 12"><path d="M0.7 5.5L4.3 2v7z M13.8 5.5L10.2 2v7z" fill="#7a1a2a" stroke="#111" stroke-width="1" stroke-linejoin="round"/><path d="M6.3 0h1.6v3.6H6.3zM6.3 4.6h1.6v1.2H6.3zM6.3 6.8h1.6v4.4H6.3z" fill="#111"/></svg></div>
<div class="t" style="top:751px;left:859px;color:#000;">S</div>
<div class="t" style="top:751px;left:895px;color:#000;">ether2</div>
<div class="t" style="top:751px;left:979px;width:116px;overflow:hidden;color:#000;">Ethernet</div>
<div class="t" style="top:751px;left:764px;width:400px;text-align:right;color:#000;">1500</div>
<div class="t" style="top:751px;left:814px;width:400px;text-align:right;color:#000;">1598</div>
<div class="t" style="top:751px;left:934px;width:400px;text-align:right;color:#000;">0 bps</div>
<div class="a" style="left:880px;top:751px;"><svg width="15" height="12" viewBox="0 0 15 12"><path d="M0.7 5.5L4.3 2v7z M13.8 5.5L10.2 2v7z" fill="#7a1a2a" stroke="#111" stroke-width="1" stroke-linejoin="round"/><path d="M6.3 0h1.6v3.6H6.3zM6.3 4.6h1.6v1.2H6.3zM6.3 6.8h1.6v4.4H6.3z" fill="#111"/></svg></div>
<div class="t" style="top:766px;left:859px;color:#000;">S</div>
<div class="t" style="top:766px;left:895px;color:#000;">ether3</div>
<div class="t" style="top:766px;left:979px;width:116px;overflow:hidden;color:#000;">Ethernet</div>
<div class="t" style="top:766px;left:764px;width:400px;text-align:right;color:#000;">1500</div>
<div class="t" style="top:766px;left:814px;width:400px;text-align:right;color:#000;">1598</div>
<div class="t" style="top:766px;left:934px;width:400px;text-align:right;color:#000;">0 bps</div>
<div class="a" style="left:880px;top:766px;"><svg width="15" height="12" viewBox="0 0 15 12"><path d="M0.7 5.5L4.3 2v7z M13.8 5.5L10.2 2v7z" fill="#7a1a2a" stroke="#111" stroke-width="1" stroke-linejoin="round"/><path d="M6.3 0h1.6v3.6H6.3zM6.3 4.6h1.6v1.2H6.3zM6.3 6.8h1.6v4.4H6.3z" fill="#111"/></svg></div>
<div class="t" style="top:781px;left:859px;color:#000;">S</div>
<div class="t" style="top:781px;left:895px;color:#000;">ether4</div>
<div class="t" style="top:781px;left:979px;width:116px;overflow:hidden;color:#000;">Ethernet</div>
<div class="t" style="top:781px;left:764px;width:400px;text-align:right;color:#000;">1500</div>
<div class="t" style="top:781px;left:814px;width:400px;text-align:right;color:#000;">1598</div>
<div class="t" style="top:781px;left:934px;width:400px;text-align:right;color:#000;">0 bps</div>
<div class="a" style="left:880px;top:781px;"><svg width="15" height="12" viewBox="0 0 15 12"><path d="M0.7 5.5L4.3 2v7z M13.8 5.5L10.2 2v7z" fill="#7a1a2a" stroke="#111" stroke-width="1" stroke-linejoin="round"/><path d="M6.3 0h1.6v3.6H6.3zM6.3 4.6h1.6v1.2H6.3zM6.3 6.8h1.6v4.4H6.3z" fill="#111"/></svg></div>
<div class="t" style="top:796px;left:859px;color:#000;">S</div>
<div class="t" style="top:796px;left:895px;color:#000;">ether5</div>
<div class="t" style="top:796px;left:979px;width:116px;overflow:hidden;color:#000;">Ethernet</div>
<div class="t" style="top:796px;left:764px;width:400px;text-align:right;color:#000;">1500</div>
<div class="t" style="top:796px;left:814px;width:400px;text-align:right;color:#000;">1598</div>
<div class="t" style="top:796px;left:934px;width:400px;text-align:right;color:#000;">0 bps</div>
<div class="a" style="left:880px;top:796px;"><svg width="15" height="12" viewBox="0 0 15 12"><path d="M0.7 5.5L4.3 2v7z M13.8 5.5L10.2 2v7z" fill="#7a1a2a" stroke="#111" stroke-width="1" stroke-linejoin="round"/><path d="M6.3 0h1.6v3.6H6.3zM6.3 4.6h1.6v1.2H6.3zM6.3 6.8h1.6v4.4H6.3z" fill="#111"/></svg></div>
<div class="t" style="top:811px;left:859px;color:#000;">R</div>
<div class="t" style="top:811px;left:895px;color:#000;">l2tp-CCR MTS</div>
<div class="t" style="top:811px;left:979px;width:116px;overflow:hidden;color:#000;">L2TP Client</div>
<div class="t" style="top:811px;left:764px;width:400px;text-align:right;color:#000;">1450</div>
<div class="t" style="top:811px;left:814px;width:400px;text-align:right;color:#000;"></div>
<div class="t" style="top:811px;left:934px;width:400px;text-align:right;color:#000;">0 bps</div>
<div class="a" style="left:880px;top:812px;"><svg width="15" height="10" viewBox="0 0 15 10"><path d="M4.5 1.2L1 4.5L4.5 7.8z M10 1.2L13.5 4.5L10 7.8z" fill="none" stroke="#111" stroke-width="1.1" stroke-linejoin="miter"/><path d="M6 4.5h2.2" stroke="#111" stroke-width="1.1"/></svg></div>
<div class="t" style="top:826px;left:859px;color:#a0a0a0;">X</div>
<div class="t" style="top:826px;left:895px;color:#a0a0a0;">ovpn-951 Beel</div>
<div class="t" style="top:826px;left:979px;width:116px;overflow:hidden;color:#a0a0a0;">OVPN Client</div>
<div class="t" style="top:826px;left:764px;width:400px;text-align:right;color:#a0a0a0;"></div>
<div class="t" style="top:826px;left:814px;width:400px;text-align:right;color:#a0a0a0;"></div>
<div class="t" style="top:826px;left:934px;width:400px;text-align:right;color:#a0a0a0;">0 bps</div>
<div class="a" style="left:880px;top:827px;"><svg width="15" height="10" viewBox="0 0 15 10"><path d="M4.5 1.2L1 4.5L4.5 7.8z M10 1.2L13.5 4.5L10 7.8z" fill="none" stroke="#a8a8a8" stroke-width="1.1" stroke-linejoin="miter"/><path d="M6 4.5h2.2" stroke="#a8a8a8" stroke-width="1.1"/></svg></div>
<div class="t" style="top:841px;left:859px;color:#a0a0a0;">X</div>
<div class="t" style="top:841px;left:895px;color:#a0a0a0;">ovpn-CCR MTS</div>
<div class="t" style="top:841px;left:979px;width:116px;overflow:hidden;color:#a0a0a0;">OVPN Client</div>
<div class="t" style="top:841px;left:764px;width:400px;text-align:right;color:#a0a0a0;"></div>
<div class="t" style="top:841px;left:814px;width:400px;text-align:right;color:#a0a0a0;"></div>
<div class="t" style="top:841px;left:934px;width:400px;text-align:right;color:#a0a0a0;">0 bps</div>
<div class="a" style="left:880px;top:842px;"><svg width="15" height="10" viewBox="0 0 15 10"><path d="M4.5 1.2L1 4.5L4.5 7.8z M10 1.2L13.5 4.5L10 7.8z" fill="none" stroke="#a8a8a8" stroke-width="1.1" stroke-linejoin="miter"/><path d="M6 4.5h2.2" stroke="#a8a8a8" stroke-width="1.1"/></svg></div>
<div class="a" style="left:857px;top:855px;width:571px;height:14px;background:#99bbe8;"></div>
<div class="a" style="left:876px;top:855px;width:1px;height:14px;background:#b0c8ea;"></div>
<div class="a" style="left:976px;top:855px;width:1px;height:14px;background:#b0c8ea;"></div>
<div class="a" style="left:1096px;top:855px;width:1px;height:14px;background:#b0c8ea;"></div>
<div class="a" style="left:1166px;top:855px;width:1px;height:14px;background:#b0c8ea;"></div>
<div class="a" style="left:1216px;top:855px;width:1px;height:14px;background:#b0c8ea;"></div>
<div class="a" style="left:1336px;top:855px;width:1px;height:14px;background:#b0c8ea;"></div>
<div class="t" style="top:856px;left:859px;color:#001040;">R</div>
<div class="t" style="top:856px;left:895px;color:#001040;">ppp-Yota</div>
<div class="t" style="top:856px;left:979px;width:116px;overflow:hidden;color:#001040;">PPP Client</div>
<div class="t" style="top:856px;left:764px;width:400px;text-align:right;color:#001040;">1400</div>
<div class="t" style="top:856px;left:814px;width:400px;text-align:right;color:#001040;"></div>
<div class="t" style="top:856px;left:934px;width:400px;text-align:right;color:#001040;">1176 bps</div>
<div class="a" style="left:1337px;top:855px;width:91px;height:15px;overflow:hidden;">
<div class="t" style="top:1px;left:-309px;width:400px;text-align:right;color:#001040;">2.0</div>
</div>
<div class="a" style="left:880px;top:857px;"><svg width="15" height="10" viewBox="0 0 15 10"><path d="M4.5 1.2L1 4.5L4.5 7.8z M10 1.2L13.5 4.5L10 7.8z" fill="none" stroke="#111" stroke-width="1.1" stroke-linejoin="miter"/><path d="M6 4.5h2.2" stroke="#111" stroke-width="1.1"/></svg></div>
<div class="t" style="top:871px;left:859px;color:#a0a0a0;">X</div>
<div class="t" style="top:871px;left:895px;color:#a0a0a0;">pptp-951</div>
<div class="t" style="top:871px;left:979px;width:116px;overflow:hidden;color:#a0a0a0;">PPTP Client</div>
<div class="t" style="top:871px;left:764px;width:400px;text-align:right;color:#a0a0a0;"></div>
<div class="t" style="top:871px;left:814px;width:400px;text-align:right;color:#a0a0a0;"></div>
<div class="t" style="top:871px;left:934px;width:400px;text-align:right;color:#a0a0a0;">0 bps</div>
<div class="a" style="left:880px;top:872px;"><svg width="15" height="10" viewBox="0 0 15 10"><path d="M4.5 1.2L1 4.5L4.5 7.8z M10 1.2L13.5 4.5L10 7.8z" fill="none" stroke="#a8a8a8" stroke-width="1.1" stroke-linejoin="miter"/><path d="M6 4.5h2.2" stroke="#a8a8a8" stroke-width="1.1"/></svg></div>
<div class="t" style="top:886px;left:859px;color:#a0a0a0;">X</div>
<div class="t" style="top:886px;left:895px;color:#a0a0a0;">pptp-ohrenetvpn</div>
<div class="t" style="top:886px;left:979px;width:116px;overflow:hidden;color:#a0a0a0;">PPTP Client</div>
<div class="t" style="top:886px;left:764px;width:400px;text-align:right;color:#a0a0a0;"></div>
<div class="t" style="top:886px;left:814px;width:400px;text-align:right;color:#a0a0a0;"></div>
<div class="t" style="top:886px;left:934px;width:400px;text-align:right;color:#a0a0a0;">0 bps</div>
<div class="a" style="left:880px;top:887px;"><svg width="15" height="10" viewBox="0 0 15 10"><path d="M4.5 1.2L1 4.5L4.5 7.8z M10 1.2L13.5 4.5L10 7.8z" fill="none" stroke="#a8a8a8" stroke-width="1.1" stroke-linejoin="miter"/><path d="M6 4.5h2.2" stroke="#a8a8a8" stroke-width="1.1"/></svg></div>
<div class="t" style="top:901px;left:859px;color:#a0a0a0;">X</div>
<div class="t" style="top:901px;left:895px;color:#a0a0a0;">sstp-CCR MTS</div>
<div class="t" style="top:901px;left:979px;width:116px;overflow:hidden;color:#a0a0a0;">SSTP Client</div>
<div class="t" style="top:901px;left:764px;width:400px;text-align:right;color:#a0a0a0;"></div>
<div class="t" style="top:901px;left:814px;width:400px;text-align:right;color:#a0a0a0;"></div>
<div class="t" style="top:901px;left:934px;width:400px;text-align:right;color:#a0a0a0;">0 bps</div>
<div class="a" style="left:880px;top:902px;"><svg width="15" height="10" viewBox="0 0 15 10"><path d="M4.5 1.2L1 4.5L4.5 7.8z M10 1.2L13.5 4.5L10 7.8z" fill="none" stroke="#a8a8a8" stroke-width="1.1" stroke-linejoin="miter"/><path d="M6 4.5h2.2" stroke="#a8a8a8" stroke-width="1.1"/></svg></div>
<div class="t" style="top:916px;left:859px;color:#000;">S</div>
<div class="t" style="top:916px;left:895px;color:#000;">wlan1</div>
<div class="t" style="top:916px;left:979px;width:116px;overflow:hidden;color:#000;">Wireless (Atheros IPQ...</div>
<div class="t" style="top:916px;left:764px;width:400px;text-align:right;color:#000;">1500</div>
<div class="t" style="top:916px;left:814px;width:400px;text-align:right;color:#000;">1600</div>
<div class="t" style="top:916px;left:934px;width:400px;text-align:right;color:#000;">0 bps</div>
<div class="a" style="left:880px;top:916px;"><svg width="15" height="12" viewBox="0 0 15 12"><path d="M0.8 6L5 1.5v9z M14.2 6L10 1.5v9z" fill="#60d8d8" stroke="#111" stroke-width="1" stroke-linejoin="round"/><path d="M5 6h5" stroke="#111" stroke-width="1.2"/></svg></div>
<div class="a" style="left:1428px;top:720px;width:16px;height:210px;background:#f0f0f0;"></div>
<div class="a" style="left:1428px;top:720px;width:1px;height:210px;background:#e8e8e8;"></div>
<div class="a" style="left:1429px;top:720px;width:15px;height:15px;background:#f0f0f0;border:1px solid #d8d8d8;box-sizing:border-box;"></div>
<div class="a" style="left:1432px;top:724px;"><svg width="9" height="8" viewBox="0 0 9 8"><path d="M4.5 0.5L8.5 4.5H6v3H3v-3H0.5z" fill="#000"/></svg></div>
<div class="a" style="left:1429px;top:890px;width:15px;height:23px;background:#cdcdcd;"></div>
<div class="a" style="left:1429px;top:913px;width:15px;height:17px;background:#f0f0f0;border:1px solid #d4d4d4;box-sizing:border-box;"></div>
<div class="a" style="left:1432px;top:918px;"><svg width="9" height="8" viewBox="0 0 9 8"><path d="M4.5 7.5L8.5 3.5H6v-3H3v3H0.5z" fill="#000"/></svg></div>
<div class="a" style="left:857px;top:930px;width:587px;height:15px;background:#f0f0f0;"></div>
<div class="a" style="left:857px;top:930px;width:571px;height:1px;background:#d0d0d0;"></div>
<div class="a" style="left:861px;top:933px;"><svg width="8" height="9" viewBox="0 0 8 9"><path d="M0.5 4.5L4.5 0.5V3h3v3h-3v2.5z" fill="#000"/></svg></div>
<div class="a" style="left:872px;top:931px;width:1px;height:15px;background:#d8d8d8;"></div>
<div class="a" style="left:1114px;top:931px;width:298px;height:14px;background:#d2d2d2;"></div>
<div class="a" style="left:1412px;top:931px;width:1px;height:15px;background:#d8d8d8;"></div>
<div class="a" style="left:1416px;top:933px;"><svg width="8" height="9" viewBox="0 0 8 9"><path d="M7.5 4.5L3.5 0.5V3h-3v3h3v2.5z" fill="#000"/></svg></div>
<div class="a" style="left:1428px;top:930px;width:1px;height:15px;background:#c8c8c8;"></div>
<div class="a" style="left:1428px;top:930px;width:16px;height:1px;background:#c8c8c8;"></div>
<div class="a" style="left:856px;top:947px;width:1px;height:19px;background:#a0a0a0;"></div>
<div class="a" style="left:856px;top:947px;width:589px;height:1px;background:#d8d8d8;"></div>
<div class="a" style="left:1444px;top:947px;width:1px;height:19px;background:#ffffff;"></div>
<div class="a" style="left:856px;top:965px;width:589px;height:1px;background:#ffffff;"></div>
<div class="t" style="top:948px;left:859px;color:#000;">15 items (1 selected)</div>
<div class="a" style="left:843px;top:850px;width:264px;height:22px;border:1px solid #3cbf5c;box-sizing:border-box;"></div>
<div class="a" style="left:1345px;top:144px;width:620px;height:488px;background:#000;"></div>
<div class="a" style="left:1346px;top:145px;width:618px;height:486px;background:#ffffff;"></div>
<div class="a" style="left:1347px;top:146px;width:617px;height:485px;background:#f0f0f0;"></div>
<div class="a" style="left:1346px;top:631px;width:619px;height:1px;background:#000;"></div>
<div class="a" style="left:1347px;top:146px;width:616px;height:21px;background:#5050cc;"></div>
<div class="t" style="top:152px;left:1351px;color:#ffffff;letter-spacing:-0.2px;">Check For Updates</div>
<div class="a" style="left:1900px;top:150px;width:14px;height:14px;background:#f4f4f4;border:2px solid #ffffff;box-sizing:border-box;"></div>
<div class="a" style="left:1903px;top:152px;width:10px;height:9px;border:1px solid #111;box-sizing:border-box;border-top-width:2px;"></div>
<div class="a" style="left:1917px;top:150px;width:3px;height:14px;background:#ffffff;"></div>
<div class="t" style="top:178px;left:1035px;width:400px;text-align:right;">Channel:</div>
<div class="a" style="left:1441px;top:174px;width:340px;height:18px;background:#ffffff;border:1px solid #a0a0a0;box-sizing:border-box;"></div>
<div class="a" style="left:1443px;top:176px;width:336px;height:14px;background:#0078d7;"></div>
<div class="t" style="top:178px;left:1444px;color:#ffffff;">release candidate</div>
<div class="a" style="left:1782px;top:174px;width:18px;height:18px;background:#f0f0f0;border:1px solid #a8a8a8;box-sizing:border-box;"></div>
<div class="a" style="left:1786px;top:178px;"><svg width="10" height="10" viewBox="0 0 10 10"><path d="M1.5 1.5h7" stroke="#000" stroke-width="1.2"/><path d="M3.8 3.5h2.4v2.2H8.5L5 9.2 1.5 5.7h2.3z" fill="#000"/></svg></div>
<div class="a" style="left:1354px;top:201px;width:446px;height:1px;background:#d9d9d9;"></div>
<div class="a" style="left:1354px;top:202px;width:446px;height:1px;background:#ffffff;"></div>
<div class="t" style="top:213px;left:1035px;width:400px;text-align:right;">Installed Version:</div>
<div class="a" style="left:1441px;top:209px;width:359px;height:18px;background:#f0f0f0;border:1px solid #a3a3a3;box-sizing:border-box;"></div>
<div class="t" style="top:213px;left:1444px;color:#000;">6.40.8</div>
<div class="t" style="top:238px;left:1035px;width:400px;text-align:right;">Latest Version:</div>
<div class="a" style="left:1441px;top:234px;width:359px;height:18px;background:#f0f0f0;border:1px solid #a3a3a3;box-sizing:border-box;"></div>
<div class="t" style="top:238px;left:1444px;color:#000;">6.43rc6</div>
<div class="a" style="left:1354px;top:261px;width:446px;height:1px;background:#d9d9d9;"></div>
<div class="a" style="left:1354px;top:262px;width:446px;height:1px;background:#ffffff;"></div>
<div class="a" style="left:1354px;top:270px;width:446px;height:330px;background:#f0f0f0;"></div>
<div class="a" style="left:1354px;top:270px;width:446px;height:1px;background:#696969;"></div>
<div class="a" style="left:1354px;top:270px;width:1px;height:330px;background:#696969;"></div>
<div class="a" style="left:1355px;top:271px;width:444px;height:1px;background:#a0a0a0;"></div>
<div class="a" style="left:1355px;top:271px;width:1px;height:328px;background:#a0a0a0;"></div>
<div class="a" style="left:1799px;top:270px;width:1px;height:330px;background:#ffffff;"></div>
<div class="a" style="left:1354px;top:599px;width:446px;height:1px;background:#ffffff;"></div>
<div class="a" style="left:1356px;top:272px;width:426px;height:326px;overflow:hidden;">
<div class="t" style="top:1px;left:1px;">What's new in 6.43rc6 (2018-May-02 12:28):</div>
<div class="t" style="top:27px;left:1px;">*) bridge - fixed LLDP packet receiving;</div>
<div class="t" style="top:40px;left:1px;">*) bridge - fixed processing of fragmented packets when hardware offloading is enabled;</div>
<div class="t" style="top:53px;left:1px;">*) dhcpv6-relay - fixed missing configuration after reboot;</div>
<div class="t" style="top:66px;left:1px;">*) hotspot - fixed user authentication when queue from old session is not removed yet;</div>
<div class="t" style="top:79px;left:1px;">*) quickset - fixed dual radio mode detection process;</div>
<div class="t" style="top:92px;left:1px;">*) wireless - fixed usage of allowed signal strength values received from RADIUS;</div>
<div class="t" style="top:105px;left:1px;">*) wireless - improved Nv2 PtMP performance;</div>
<div class="t" style="top:131px;left:1px;">Other changes since v6.42.1:</div>
<div class="t" style="top:157px;left:1px;">*) bridge - added ingress filtering options to bridge interface (CLI only);</div>
<div class="t" style="top:170px;left:1px;">*) bridge - fixed dynamic VLAN table entries when using ingress filtering;</div>
<div class="t" style="top:183px;left:1px;">*) certificate - add "expires-after" parameter (CLI only);</div>
<div class="t" style="top:196px;left:1px;">*) chr - added checksum offload support for Hyper-V installations;</div>
<div class="t" style="top:209px;left:1px;">*) chr - added large send offload support for Hyper-V installations;</div>
<div class="t" style="top:222px;left:1px;">*) chr - added multiqueue support on Xen installations;</div>
<div class="t" style="top:235px;left:1px;">*) chr - added support for multiqueue feature on "virtio-net";</div>
<div class="t" style="top:248px;left:1px;">*) chr - added virtual Receive Side Scaling support for Hyper-V installations;</div>
<div class="t" style="top:261px;left:1px;">*) chr - do not show IRQ entries from removed devices;</div>
<div class="t" style="top:274px;left:1px;">*) chr - fixed NIC hotplug for "virtio-net";</div>
<div class="t" style="top:287px;left:1px;">*) chr - improved boot time for Hyper-V installations;</div>
<div class="t" style="top:300px;left:1px;">*) crs317 - fixed link flapping when inserted S+RJ10 module without any cable;</div>
<div class="t" style="top:313px;left:1px;">*) ipsec - added "responder" parameter for "mode-config" to allow multiple initiator</div>
</div>
<div class="a" style="left:1783px;top:272px;width:16px;height:326px;background:#f0f0f0;"></div>
<div class="a" style="left:1786px;top:276px;"><svg width="10" height="7" viewBox="0 0 10 7"><path d="M1 6L5 2L9 6" stroke="#444" stroke-width="1.6" fill="none"/></svg></div>
<div class="a" style="left:1784px;top:288px;width:14px;height:92px;background:#cdcdcd;"></div>
<div class="a" style="left:1786px;top:586px;"><svg width="10" height="7" viewBox="0 0 10 7"><path d="M1 1L5 5L9 1" stroke="#444" stroke-width="1.6" fill="none"/></svg></div>
<div class="a" style="left:1816px;top:173px;width:110px;height:24px;background:#f0f0f0;border:1px solid #101010;box-sizing:border-box;"></div>
<div class="a" style="left:1817px;top:174px;width:108px;height:22px;border:1px solid #ffffff;box-sizing:border-box;"></div>
<div class="t" style="top:179px;left:1671.0px;width:400px;text-align:center;">OK</div>
<div class="a" style="left:1816px;top:205px;width:110px;height:23px;background:#f0f0f0;border:1px solid #a8a8a8;box-sizing:border-box;"></div>
<div class="a" style="left:1817px;top:206px;width:108px;height:21px;border:1px solid #fbfbfb;box-sizing:border-box;"></div>
<div class="t" style="top:211px;left:1671.0px;width:400px;text-align:center;">Download</div>
<div class="a" style="left:1816px;top:231px;width:110px;height:23px;background:#f0f0f0;border:1px solid #a8a8a8;box-sizing:border-box;"></div>
<div class="a" style="left:1817px;top:232px;width:108px;height:21px;border:1px solid #fbfbfb;box-sizing:border-box;"></div>
<div class="t" style="top:237px;left:1671.0px;width:400px;text-align:center;">Download&amp;Install</div>
<div class="a" style="left:1348px;top:608px;width:1px;height:21px;background:#a0a0a0;"></div>
<div class="a" style="left:1348px;top:608px;width:580px;height:1px;background:#d8d8d8;"></div>
<div class="a" style="left:1927px;top:608px;width:1px;height:21px;background:#ffffff;"></div>
<div class="a" style="left:1348px;top:628px;width:580px;height:1px;background:#ffffff;"></div>
<div class="t" style="top:611px;left:1351px;color:#000;">New version is available</div>
</body></html>
